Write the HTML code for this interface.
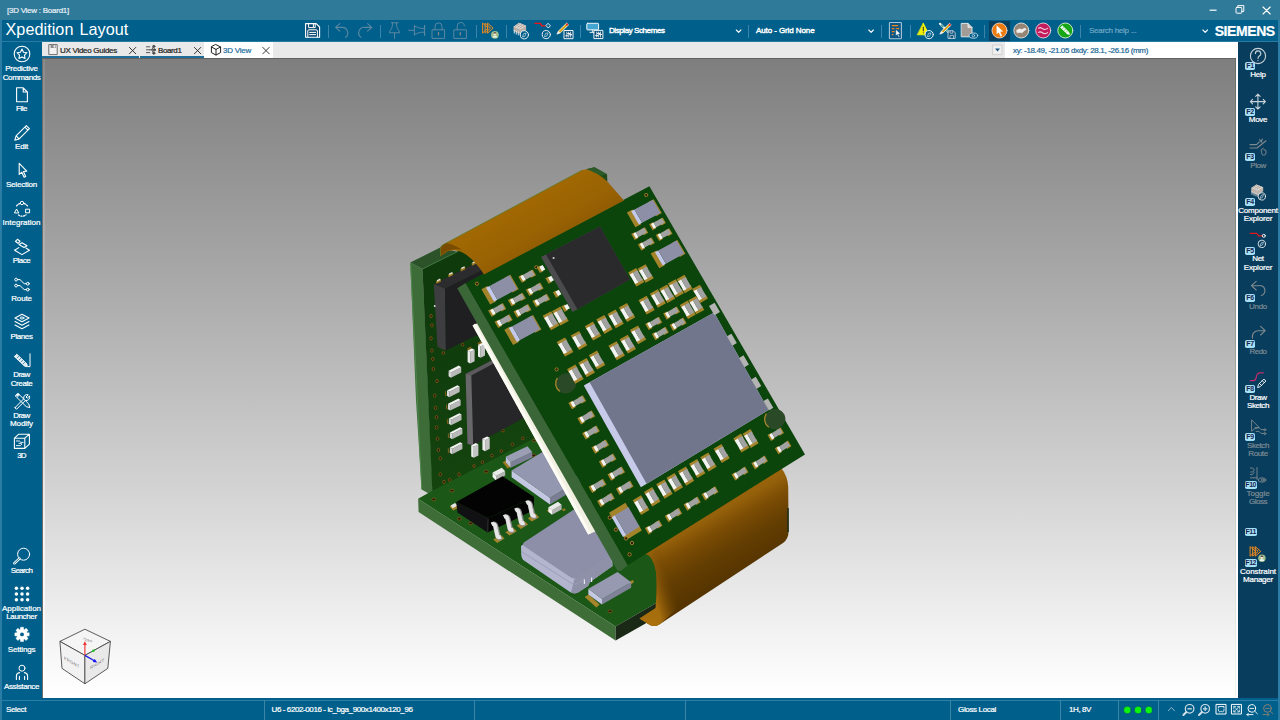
<!DOCTYPE html>
<html lang="en">
<head>
<meta charset="utf-8">
<title>Xpedition Layout - [3D View : Board1]</title>
<style>
*{box-sizing:border-box;margin:0;padding:0}
html,body{width:1280px;height:720px;overflow:hidden;background:#005f8b;font-family:"Liberation Sans",sans-serif;color:#fff}
.abs{position:absolute}
span.abs{-webkit-text-stroke:0.22px currentColor}
#app{position:relative;width:1280px;height:720px;overflow:hidden;background:#005f8b}
#titlebar{position:absolute;left:0;top:0;width:1280px;height:20px;background:#2f7999}
#titlebar .t{position:absolute;left:7px;top:5px;font-size:8px;line-height:10px;color:#e8f1f6;letter-spacing:0.1px}
#toolbar{position:absolute;left:0;top:20px;width:1280px;height:22px;background:#005f8b}
#appname{position:absolute;left:5px;top:19px;font-size:17.5px;line-height:22px;color:#fff;letter-spacing:0.35px;word-spacing:1px}
#tabbar{position:absolute;left:42px;top:42px;width:1196px;height:16px;background:#e9e9e9}
#left{position:absolute;left:0;top:42px;width:42px;height:656px;background:#005f8b}
#right{position:absolute;left:1238px;top:42px;width:40px;height:656px;background:#093d5d}
#status{position:absolute;left:0;top:698px;width:1280px;height:22px;background:#005f8b}
#view{position:absolute;left:42px;top:58px;width:1194px;height:640px;background:linear-gradient(#7e7e7e 0%,#a8a8a8 34%,#d0d0d0 65%,#fcfcfc 97%,#fff 100%)}
.lb{position:absolute;left:0;width:42px;text-align:center;font-size:7.6px;line-height:9px;color:#fff;white-space:nowrap}
.rb{position:absolute;left:-4px;width:51px;text-align:center;font-size:7.6px;line-height:9px;color:#fff;white-space:nowrap}
.rb.dim{color:#5d7f96}
.fk{position:absolute;border-radius:1.8px;background:#a4e0f6;color:#1a2450;font-size:7px;font-weight:bold;text-align:center;letter-spacing:-0.4px;overflow:hidden}
.sep{position:absolute;top:25px;width:1px;height:13px;background:#3c84a8}
.tt{position:absolute;font-size:7.6px;line-height:10px;color:#fff;white-space:nowrap}
.st{position:absolute;top:5px;font-size:7.6px;line-height:10px;color:#fff;white-space:nowrap}
.ssep{position:absolute;width:1px;height:20px;background:#3c84a8}
svg{position:absolute;overflow:visible}
</style>
</head>
<body>
<div id="app">
<div id="view"></div>
<div class="abs" style="left:42px;top:58px;width:1194px;height:1px;background:#616161"></div>
<div class="abs" style="left:42px;top:58px;width:1px;height:640px;background:#6e6e6e"></div><div class="abs" style="left:43px;top:59px;width:1.5px;height:639px;background:linear-gradient(#8a8a8a,#bdbdbd 40%,#f4f4f4 75%,#fff)"></div>
<div class="abs" style="left:1235px;top:58px;width:1px;height:640px;background:linear-gradient(#6a6a6a,#9c9c9c 45%,#dcdcdc 80%,#f6f6f6)"></div>
<div class="abs" style="left:1236px;top:58px;width:2px;height:640px;background:#fff"></div>
<div id="titlebar"></div><div id="toolbar"></div>
<div class="abs" style="left:0;top:41px;width:1280px;height:1px;background:#2a7aa2"></div>
<div id="left"></div><div id="right"></div>
<div id="tabbar"></div>
<div id="status"></div><div class="abs" style="left:0;top:700px;width:1280px;height:1px;background:#2d7ea6"></div>
<div class="abs" style="left:0;top:20px;width:1.5px;height:700px;background:#2b7da5"></div><div class="abs" style="left:1278px;top:20px;width:2px;height:700px;background:#2b7da5"></div>
<span class="abs" style="left:7.00px;top:7px;font-size:8px;line-height:8px;letter-spacing:-0.253px;color:#e4eef4;white-space:nowrap;">[3D View : Board1]</span>
<span class="abs" style="left:5.50px;top:21px;font-size:16.2px;line-height:16px;letter-spacing:0.050px;color:#fff;white-space:nowrap;word-spacing:1.5px;-webkit-text-stroke:0;">Xpedition Layout</span>
<div class="abs" style="left:204px;top:42px;width:69px;height:16px;background:#fff"></div>
<div class="abs" style="left:42px;top:56px;width:162px;height:2px;background:#1e6e98"></div>
<div class="abs" style="left:139px;top:55px;width:1px;height:3px;background:#e9e9e9"></div>
<div class="abs" style="left:1005px;top:42px;width:233px;height:16px;background:#fff"></div>
<div class="abs" style="left:204px;top:57.5px;width:1032px;height:1.5px;background:#616161"></div>
<span class="abs" style="left:60.00px;top:47px;font-size:8px;line-height:8px;letter-spacing:-0.282px;color:#222;white-space:nowrap;">UX Video Guides</span>
<span class="abs" style="left:158.00px;top:47px;font-size:8px;line-height:8px;letter-spacing:-0.383px;color:#222;white-space:nowrap;">Board1</span>
<span class="abs" style="left:223.00px;top:47px;font-size:8px;line-height:8px;letter-spacing:-0.235px;color:#1f6fa0;white-space:nowrap;">3D View</span>
<span class="abs" style="left:1013.00px;top:47px;font-size:8px;line-height:8px;letter-spacing:-0.343px;color:#1f6a97;white-space:nowrap;">xy: -18.49, -21.05 dxdy: 28.1, -26.16 (mm)</span>
<span class="abs" style="left:609.00px;top:27px;font-size:8px;line-height:8px;letter-spacing:-0.420px;color:#fff;white-space:nowrap;-webkit-text-stroke:0.4px #fff;">Display Schemes</span>
<span class="abs" style="left:756.00px;top:27px;font-size:8px;line-height:8px;letter-spacing:-0.095px;color:#fff;white-space:nowrap;-webkit-text-stroke:0.4px #fff;">Auto - Grid None</span>
<span class="abs" style="left:1089.00px;top:27px;font-size:8px;line-height:8px;letter-spacing:-0.272px;color:#6fa6c4;white-space:nowrap;">Search help ...</span>
<span class="abs" style="left:1214.70px;top:24px;font-size:14px;line-height:14px;letter-spacing:-0.416px;color:#fff;white-space:nowrap;font-weight:bold;">SIEMENS</span>
<div class="sep" style="left:327.5px"></div><div class="sep" style="left:379.5px"></div><div class="sep" style="left:476.0px"></div><div class="sep" style="left:506.0px"></div><div class="sep" style="left:580.0px"></div><div class="sep" style="left:748.0px"></div><div class="sep" style="left:880.5px"></div><div class="sep" style="left:910.0px"></div><div class="sep" style="left:983.5px"></div><div class="sep" style="left:1080.0px"></div>
<div class="abs" style="left:989.3px;top:21px;width:20.5px;height:19.5px;background:#0a3f60"></div>
<span class="abs" style="left:5.25px;top:65px;font-size:8px;line-height:8px;letter-spacing:-0.263px;color:#fff;white-space:nowrap;">Predictive</span>
<span class="abs" style="left:2.75px;top:74px;font-size:8px;line-height:8px;letter-spacing:-0.425px;color:#fff;white-space:nowrap;">Commands</span>
<span class="abs" style="left:16.00px;top:105px;font-size:8px;line-height:8px;letter-spacing:-0.473px;color:#fff;white-space:nowrap;">File</span>
<span class="abs" style="left:15.00px;top:143px;font-size:8px;line-height:8px;letter-spacing:-0.196px;color:#fff;white-space:nowrap;">Edit</span>
<span class="abs" style="left:6.00px;top:181px;font-size:8px;line-height:8px;letter-spacing:-0.212px;color:#fff;white-space:nowrap;">Selection</span>
<span class="abs" style="left:2.50px;top:219px;font-size:8px;line-height:8px;letter-spacing:0.018px;color:#fff;white-space:nowrap;">Integration</span>
<span class="abs" style="left:12.75px;top:257px;font-size:8px;line-height:8px;letter-spacing:-0.502px;color:#fff;white-space:nowrap;">Place</span>
<span class="abs" style="left:11.25px;top:295px;font-size:8px;line-height:8px;letter-spacing:-0.170px;color:#fff;white-space:nowrap;">Route</span>
<span class="abs" style="left:10.50px;top:333px;font-size:8px;line-height:8px;letter-spacing:-0.410px;color:#fff;white-space:nowrap;">Planes</span>
<span class="abs" style="left:13.25px;top:371px;font-size:8px;line-height:8px;letter-spacing:-0.542px;color:#fff;white-space:nowrap;">Draw</span>
<span class="abs" style="left:10.75px;top:380px;font-size:8px;line-height:8px;letter-spacing:-0.419px;color:#fff;white-space:nowrap;">Create</span>
<span class="abs" style="left:13.25px;top:412px;font-size:8px;line-height:8px;letter-spacing:-0.542px;color:#fff;white-space:nowrap;">Draw</span>
<span class="abs" style="left:10.00px;top:420px;font-size:8px;line-height:8px;letter-spacing:-0.094px;color:#fff;white-space:nowrap;">Modify</span>
<span class="abs" style="left:17.25px;top:452px;font-size:8px;line-height:8px;letter-spacing:-0.863px;color:#fff;white-space:nowrap;">3D</span>
<span class="abs" style="left:10.75px;top:567px;font-size:8px;line-height:8px;letter-spacing:-0.641px;color:#fff;white-space:nowrap;">Search</span>
<span class="abs" style="left:2.00px;top:605px;font-size:8px;line-height:8px;letter-spacing:-0.012px;color:#fff;white-space:nowrap;">Application</span>
<span class="abs" style="left:6.25px;top:613px;font-size:8px;line-height:8px;letter-spacing:-0.357px;color:#fff;white-space:nowrap;">Launcher</span>
<span class="abs" style="left:7.75px;top:646px;font-size:8px;line-height:8px;letter-spacing:-0.176px;color:#fff;white-space:nowrap;">Settings</span>
<span class="abs" style="left:4.00px;top:683px;font-size:8px;line-height:8px;letter-spacing:-0.368px;color:#fff;white-space:nowrap;">Assistance</span>
<span class="abs" style="left:1250.25px;top:71px;font-size:8px;line-height:8px;letter-spacing:-0.238px;color:#fff;white-space:nowrap;">Help</span>
<span class="abs" style="left:1248.75px;top:116px;font-size:8px;line-height:8px;letter-spacing:-0.266px;color:#fff;white-space:nowrap;">Move</span>
<span class="abs" style="left:1250.25px;top:162px;font-size:8px;line-height:8px;letter-spacing:-0.460px;color:#7b8a92;white-space:nowrap;">Plow</span>
<span class="abs" style="left:1238.25px;top:207px;font-size:8px;line-height:8px;letter-spacing:-0.207px;color:#fff;white-space:nowrap;">Component</span>
<span class="abs" style="left:1243.75px;top:215px;font-size:8px;line-height:8px;letter-spacing:-0.161px;color:#fff;white-space:nowrap;">Explorer</span>
<span class="abs" style="left:1252.25px;top:255px;font-size:8px;line-height:8px;letter-spacing:-0.316px;color:#fff;white-space:nowrap;">Net</span>
<span class="abs" style="left:1243.75px;top:264px;font-size:8px;line-height:8px;letter-spacing:-0.161px;color:#fff;white-space:nowrap;">Explorer</span>
<span class="abs" style="left:1249.00px;top:303px;font-size:8px;line-height:8px;letter-spacing:-0.281px;color:#7b8a92;white-space:nowrap;">Undo</span>
<span class="abs" style="left:1249.50px;top:348px;font-size:8px;line-height:8px;letter-spacing:-0.531px;color:#7b8a92;white-space:nowrap;">Redo</span>
<span class="abs" style="left:1249.50px;top:394px;font-size:8px;line-height:8px;letter-spacing:-0.417px;color:#fff;white-space:nowrap;">Draw</span>
<span class="abs" style="left:1247.00px;top:402px;font-size:8px;line-height:8px;letter-spacing:-0.410px;color:#fff;white-space:nowrap;">Sketch</span>
<span class="abs" style="left:1247.00px;top:442px;font-size:8px;line-height:8px;letter-spacing:-0.410px;color:#7b8a92;white-space:nowrap;">Sketch</span>
<span class="abs" style="left:1248.25px;top:450px;font-size:8px;line-height:8px;letter-spacing:-0.370px;color:#7b8a92;white-space:nowrap;">Route</span>
<span class="abs" style="left:1246.50px;top:490px;font-size:8px;line-height:8px;letter-spacing:-0.096px;color:#7b8a92;white-space:nowrap;">Toggle</span>
<span class="abs" style="left:1249.00px;top:498px;font-size:8px;line-height:8px;letter-spacing:-0.490px;color:#7b8a92;white-space:nowrap;">Gloss</span>
<span class="abs" style="left:1240.00px;top:568px;font-size:8px;line-height:8px;letter-spacing:-0.046px;color:#fff;white-space:nowrap;">Constraint</span>
<span class="abs" style="left:1243.00px;top:576px;font-size:8px;line-height:8px;letter-spacing:-0.225px;color:#fff;white-space:nowrap;">Manager</span>
<span class="fk" style="left:1245.2px;top:61.6px;width:9.6px;height:8.2px;line-height:8.4px">F1</span><span class="fk" style="left:1245.2px;top:108.2px;width:9.6px;height:8.2px;line-height:8.4px">F2</span><span class="fk" style="left:1245.2px;top:153.2px;width:9.6px;height:8.2px;line-height:8.4px">F3</span><span class="fk" style="left:1245.2px;top:198.2px;width:9.6px;height:8.2px;line-height:8.4px">F4</span><span class="fk" style="left:1245.2px;top:246.6px;width:9.6px;height:8.2px;line-height:8.4px">F5</span><span class="fk" style="left:1245.2px;top:294.2px;width:9.6px;height:8.2px;line-height:8.4px">F6</span><span class="fk" style="left:1245.2px;top:339.9px;width:9.6px;height:8.2px;line-height:8.4px">F7</span><span class="fk" style="left:1245.2px;top:384.9px;width:9.6px;height:8.2px;line-height:8.4px">F8</span><span class="fk" style="left:1245.2px;top:433.2px;width:9.6px;height:8.2px;line-height:8.4px">F9</span><span class="fk" style="left:1244.6px;top:480.6px;width:12.2px;height:8.2px;line-height:8.4px">F10</span><span class="fk" style="left:1244.6px;top:528.2px;width:12.2px;height:8.2px;line-height:8.4px">F11</span><span class="fk" style="left:1244.6px;top:559.2px;width:12.2px;height:8.2px;line-height:8.4px">F12</span>
<span class="abs" style="left:6.00px;top:706px;font-size:8px;line-height:8px;letter-spacing:-0.372px;color:#fff;white-space:nowrap;">Select</span>
<span class="abs" style="left:271.50px;top:706px;font-size:8px;line-height:8px;letter-spacing:-0.399px;color:#fff;white-space:nowrap;">U6 - 6202-0016 - ic_bga_900x1400x120_96</span>
<span class="abs" style="left:958.00px;top:706px;font-size:8px;line-height:8px;letter-spacing:-0.345px;color:#fff;white-space:nowrap;">Gloss Local</span>
<span class="abs" style="left:1069.00px;top:706px;font-size:8px;line-height:8px;letter-spacing:-0.410px;color:#fff;white-space:nowrap;">1H, 8V</span>
<div class="ssep" style="left:264.3px;top:700px"></div><div class="ssep" style="left:474.3px;top:700px"></div><div class="ssep" style="left:685.3px;top:700px"></div><div class="ssep" style="left:950.3px;top:700px"></div><div class="ssep" style="left:1060.3px;top:700px"></div><div class="ssep" style="left:1117.8px;top:700px"></div><div class="ssep" style="left:1157.8px;top:700px"></div>
<svg width="1280" height="720" viewBox="0 0 1280 720" style="left:0;top:0" fill="none" stroke="#fff" stroke-width="1" stroke-linecap="round" stroke-linejoin="round">
<circle cx="22" cy="54" r="7.8" stroke-width="1.1"/><polygon points="22.00,49.10 23.53,52.20 26.95,52.69 24.47,55.10 25.06,58.51 22.00,56.90 18.94,58.51 19.53,55.10 17.05,52.69 20.47,52.20" stroke-width="1.1"/>
<path d="M16.6 87.8h6.6l4.2 4.2v9.8h-10.8z M23.2 87.8v4.2h4.2" stroke-width="1.1"/>
<path d="M14.8 140.2l1.3-4.4 10.2-10.2 3.1 3.1-10.2 10.2z M16.1 135.8l3.1 3.1 M24.8 127.1l3.1 3.1" stroke-width="1.1"/>
<path d="M19.2 163.4v11l2.6-2.2 2.3 5 1.6-0.8-2.3-4.9 3.4-0.4z" stroke-width="1.1"/>
<circle cx="22" cy="203" r="1.7"/><path d="M14.6 212.6l2-3.6 2 3.6z"/><rect x="26" y="209.2" width="3.6" height="3.6"/><path d="M19.6 203.6a7 7 0 0 0-3.4 3 M24.4 203.6a7 7 0 0 1 3.6 3.4 M18.6 215a6 6 0 0 0 7.4-0.2" stroke-dasharray="1.1 1.5" stroke-width="1.3"/>
<path d="M15.4 241.3l2-2 2.6 2-2 2z M19 244.5l3-1.8 5 3-3 1.8z M14.6 250.2l4.2-2.6 M29.4 250.2l-7.4 4.4-7.4-4.4 M29.4 250.2l-3.4-2.2" stroke-width="1.1"/>
<circle cx="16.1" cy="279.6" r="1.4"/><circle cx="16.1" cy="285.6" r="1.4"/><circle cx="27.8" cy="283.7" r="1.4"/><circle cx="27.8" cy="289.6" r="1.4"/><path d="M17.5 279.6h2.5l4.2 4.1h2.2 M17.5 285.6h2.5l4.2 4h2.2"/>
<path d="M22 314.3l7 3.7-7 3.7-7-3.7z M15 321.5l7 3.7 7-3.7 M15 325l7 3.7 7-3.7" stroke-width="1.1"/><ellipse cx="22" cy="318" rx="2" ry="1"/>
<path d="M15 356l1.8-1.8 10 9.6 0.6 3-3-0.8-10-9.4z" fill="#dfeaf0" stroke-width="0.9"/><path d="M30 353.8v12.8h-1.6" stroke-width="1"/><path d="M17 358l2-2 M19 360l2-2 M21 362l2-2 M23 364l2-2" stroke="#005f8b" stroke-width="0.6"/>
<path d="M15.2 407.4l8.6-8.6a3.3 3.3 0 0 1 4.4-4l-2.2 2.2 1.2 1.2 2.2-2.2a3.3 3.3 0 0 1-4 4.4l-8.6 8.6a1.3 1.3 0 0 1-1.6-1.6z" stroke-width="1"/><path d="M16.2 395.2l1.8-1.8 10.8 10.6 1 3.6-3.6-1-10.8-10.6z M17.6 396.8l1.8-1.8" stroke-width="1"/><path d="M15.8 395l1.9-1.9 1.5 1.5-1.9 1.9z" fill="#fff" stroke="none"/>
<path d="M14.4 438.2h10.4v10.2h-10.4z M14.4 438.2l4.4-4h10.6l-4.6 4 M29.4 434.2v10l-4.6 4.2" stroke-width="1.1"/><path d="M16.4 441h3l1.4 1.4h2.4 M16.4 445.6h4l1.2-1.2 M19 443.4h2.4" stroke-width="0.9"/>
<circle cx="23.6" cy="554.2" r="6"/><path d="M19.4 558.6l-5 4.6" stroke-width="2.6"/><path d="M19.4 558.6l-5 4.6" stroke="#005f8b" stroke-width="0.9"/>
<circle cx="16.4" cy="588.3" r="1.75" fill="#fff" stroke="none"/><circle cx="16.4" cy="594.1" r="1.75" fill="#fff" stroke="none"/><circle cx="16.4" cy="599.8" r="1.75" fill="#fff" stroke="none"/><circle cx="22" cy="588.3" r="1.75" fill="#fff" stroke="none"/><circle cx="22" cy="594.1" r="1.75" fill="#fff" stroke="none"/><circle cx="22" cy="599.8" r="1.75" fill="#fff" stroke="none"/><circle cx="27.6" cy="588.3" r="1.75" fill="#fff" stroke="none"/><circle cx="27.6" cy="594.1" r="1.75" fill="#fff" stroke="none"/><circle cx="27.6" cy="599.8" r="1.75" fill="#fff" stroke="none"/>
<polygon points="29.15,632.95 29.15,635.85 27.06,635.97 26.69,636.87 28.08,638.43 26.03,640.48 24.47,639.09 23.57,639.46 23.45,641.55 20.55,641.55 20.43,639.46 19.53,639.09 17.97,640.48 15.92,638.43 17.31,636.87 16.94,635.97 14.85,635.85 14.85,632.95 16.94,632.83 17.31,631.93 15.92,630.37 17.97,628.32 19.53,629.71 20.43,629.34 20.55,627.25 23.45,627.25 23.57,629.34 24.47,629.71 26.03,628.32 28.08,630.37 26.69,631.93 27.06,632.83" fill="#fff" stroke="#fff" stroke-width="0.5"/><circle cx="22" cy="634.4" r="1.9" fill="#005f8b" stroke="none"/>
<circle cx="22" cy="668.2" r="3"/><path d="M16.4 679.4v-3.4a3.6 3.6 0 0 1 3.2-3.4 M27.6 679.4v-3.4a3.6 3.6 0 0 0-3.2-3.4 M19.4 679.4v-3 M24.6 679.4v-3" stroke-width="1.1"/>
<g stroke="#c9d3d9"><circle cx="1258" cy="56" r="7.6" stroke-width="1.1"/><path d="M1255.4 53.6a2.7 2.7 0 1 1 3.9 2.4c-1 0.6-1.3 1.2-1.3 2.4" stroke-width="1.1"/><circle cx="1258" cy="60.6" r="0.6" fill="#c9d3d9" stroke="none"/></g>
<g stroke="#c9d3d9" stroke-width="1.1"><path d="M1250.4 101.6h15 M1257.9 94.2v14.8 M1252.6 99.4l-2.2 2.2 2.2 2.2 M1263.2 99.4l2.2 2.2-2.2 2.2 M1255.7 96.4l2.2-2.2 2.2 2.2 M1255.7 106.8l2.2 2.2 2.2-2.2"/></g>
<g stroke="#7f8a8f" stroke-width="1.1"><path d="M1250 144.6h6.6l2.6-2.6 M1250 148h7l9-7.2 M1259.6 139.6l1.8 2.6 M1262.4 139l-1.2 3"/><path d="M1261.6 149.4l1.6-1 0.8 1.4 2 0.6v2.6a2.2 2.2 0 0 1-4.4 0z" stroke-width="0.9"/></g>
<g stroke="none"><path d="M1251.2 188l5.2-3.6 6.8 2.8v4l-5.4 3.8-6.6-3z" fill="#bdb5ad"/><path d="M1251.2 188l5.2-3.6 6.8 2.8-5.4 3.6z" fill="#ddd6cf"/><path d="M1252 191.6v2.6 M1254 192.6v2.6 M1256 193.4v2.6 M1258 194.4v2" stroke="#e8e8e8" stroke-width="0.9"/><path d="M1253 187.6l4-2.6 M1255 188.4l4-2.6 M1257 189.2l4-2.6" stroke="#8f877f" stroke-width="0.6"/></g>
<circle cx="1261.8" cy="196.4" r="3.7" fill="#0a3f60" stroke="#e6ecef" stroke-width="0.9"/><path d="M1260.2 198l1-2.6 2.4-1-1 2.6z" stroke="#e6ecef" stroke-width="0.6"/>
<path d="M1250.2 233.3h6.4l2 2.6h3.6" stroke="#e8141c" stroke-width="1.2"/><circle cx="1263.8" cy="235.8" r="1.5" stroke="#fff" stroke-width="0.9"/>
<circle cx="1261.8" cy="243.9" r="3.7" fill="#0a3f60" stroke="#e6ecef" stroke-width="0.9"/><path d="M1260.2 245.5l1-2.6 2.4-1-1 2.6z" stroke="#e6ecef" stroke-width="0.6"/>
<path d="M1256.2 281.4l-4.8 4.3 4.8 4.3 M1251.6 285.7h6.6a5 5 0 0 1 3.2 9.8" stroke="#7f8a8f" stroke-width="1.1"/>
<path d="M1260.6 326.4l4.6 4.3-4.6 4.3 M1264.8 330.7h-6.4a6 6 0 0 0-6 7.4" stroke="#7f8a8f" stroke-width="1.1"/>
<path d="M1250.2 380.6h3.2c2.6 0 2.6-2 3-4s0.800-3.800 3.400-3.800h3.600" stroke="#c22b6c" stroke-width="1.2"/><path d="M1257.700 387.200l0.800-2.800 5.400-5.400 2 2-5.400 5.400z M1259.400 383.400l2 2 M1262.200 380.600l2 2" stroke="#fff" stroke-width="0.9"/>
<g stroke="#7f8a8f" stroke-width="0.9"><path d="M1251.600 420.200v11l3-2.400 4.200-1.200z"/><path d="M1255 427.600h4l2 2h3 M1256 431.400h3l2 2h3"/><circle cx="1264.800" cy="429.800" r="1"/><circle cx="1264.800" cy="433.600" r="1"/></g>
<g stroke="#7f8a8f" stroke-width="0.9"><path d="M1250.400 468h2.400l1.600 2-1.600 2h-2 M1250.400 474.600h2l1.600-2 M1250.400 477.800h6.600 M1257 467.400v12"/><ellipse cx="1262" cy="480" rx="3.800" ry="2.200"/><ellipse cx="1262.600" cy="480" rx="1.600" ry="0.900"/></g>
<path d="M1250.40 546.90l5.20 4.50l-5.20 4.50z M1253.00 546.90l5.20 4.50l-5.20 4.50z M1255.60 546.90l5.20 4.50l-5.20 4.50z" stroke="#f08a1d" stroke-width="1.0" stroke-linejoin="miter"/>
<g stroke="none"><circle cx="1261.9" cy="558.3" r="3.7" fill="#9fc08c"/><circle cx="1261.9" cy="557.4" r="1.4" fill="#f4e6d6"/><path d="M1259.7 560.9a2.2 2 0 0 1 4.4 0z" fill="#f2f6f8"/><path d="M1260.4 557.0a1.5 1.5 0 0 1 3 0z" fill="#5a4a3a"/></g>
<path d="M305.6 23.6h10.600l3.400 3.400v10.200h-14z" fill="#0a4a72" stroke="#fff" stroke-width="1.1"/><path d="M308.600 23.800v3.800h6.600v-3.800 M313.400 24.400v2.200 M307.800 37v-6a1.200 1.200 0 0 1 1.200-1.200h7.200a1.200 1.200 0 0 1 1.200 1.200v6 M309.600 32.400h6 M309.600 34.600h6" stroke="#fff" stroke-width="1"/>
<path d="M339.800 23.600l-4.200 3.800 4.200 3.800 M335.800 27.400h6.200a5.600 5.600 0 0 1 3.600 10" stroke="#5c88a2" stroke-width="1.1"/>
<path d="M367.600 23.600l4.200 3.800-4.200 3.800 M371.600 27.400h-6.200a5.600 5.600 0 0 0-4.400 10" stroke="#5c88a2" stroke-width="1.1"/>
<path d="M391.400 22.800h6.600 M392.400 22.800v2.600c0 3-3 5-3 7.400h10.200c0-2.400-3-4.400-3-7.400v-2.600 M394.600 32.800v5.600" stroke="#5c88a2" stroke-width="1"/>
<path d="M408.800 30.300h5.600 M414.400 25.400v9.800 M414.400 26.400c3 0 4 2 7.400 2h2.800v-3 M414.400 34.200c3 0 4-2 7.400-2h2.800v3 M424.600 25.400v9.800" stroke="#5c88a2" stroke-width="1"/>
<rect x="432.400" y="29.800" width="12.200" height="8.600" stroke="#5c88a2" stroke-width="1"/><path d="M435 29.800v-3.200a3.500 3.800 0 0 1 7 0v3.200" stroke="#5c88a2" stroke-width="1"/><path d="M438.500 32.600v2.400" stroke="#8f8a86" stroke-width="1.200"/>
<rect x="454.200" y="29.800" width="12.200" height="8.600" stroke="#5c88a2" stroke-width="1"/><path d="M457.200 29.800v-3.200a3.600 3.800 0 0 1 7.200-0.600" stroke="#5c88a2" stroke-width="1"/><path d="M460.300 32.600v2.400" stroke="#8f8a86" stroke-width="1.200"/>
<path d="M482.90 23.30l5.20 4.80l-5.20 4.80z M485.40 23.30l5.20 4.80l-5.20 4.80z M487.90 23.30l5.20 4.80l-5.20 4.80z" stroke="#f08a1d" stroke-width="1.0" stroke-linejoin="miter"/>
<g stroke="none"><circle cx="494.9" cy="34.8" r="3.9" fill="#9fc08c"/><circle cx="494.9" cy="33.9" r="1.4" fill="#f4e6d6"/><path d="M492.7 37.4a2.2 2 0 0 1 4.4 0z" fill="#f2f6f8"/><path d="M493.4 33.5a1.5 1.5 0 0 1 3 0z" fill="#5a4a3a"/></g>
<g stroke="none" transform="translate(513.5 22.7)"><path d="M0 4l5.600-4 7 3v4.400l-5.600 4-7-3.200z" fill="#b9b0a8"/><path d="M0 4l5.600-4 7 3-5.600 3.800z" fill="#ded7d0"/><path d="M0.800 7.600v2.800 M2.800 8.600v2.800 M4.800 9.400v2.800 M6.800 10.400v2" stroke="#eef0f0" stroke-width="0.900"/><path d="M2 3.600l4.400-2.800 M4.200 4.500l4.400-2.800 M6.400 5.400l4.400-2.800" stroke="#8d857d" stroke-width="0.600"/></g><circle cx="524.4" cy="34.8" r="4.1" fill="#005f8b" stroke="#e9eff2" stroke-width="1"/><path d="M522.6 36.599999999999994l1.100-2.900 2.500-0.700-1.100 2.900z" stroke="#e9eff2" stroke-width="0.600"/>
<path d="M535 23.400h5.400l1.400 2.500h3.400" stroke="#f01418" stroke-width="1.300"/><path d="M548.300 23.600l2.100 2.200-2.100 2.200-2.100-2.200z" stroke="#fff" stroke-width="0.900"/><circle cx="546.3" cy="34.6" r="4.1" fill="#005f8b" stroke="#e9eff2" stroke-width="1"/><path d="M544.5 36.4l1.100-2.900 2.500-0.700-1.100 2.900z" stroke="#e9eff2" stroke-width="0.600"/>
<path d="M557.3 34.0L560.4 32.8L568.5 24.9L566.7 23.1L558.5 31.0z" fill="#d9a514" stroke="#f4f4f0" stroke-width="0.800"/><path d="M557.3 34.0L560.4 32.8L558.5 31.0z" fill="#f6f2ea" stroke="none"/><circle cx="567.0" cy="24.6" r="1.100" fill="#e8262c" stroke="none"/><rect x="564.4" y="30.5" width="8.6" height="8.2" fill="#0a4f7a" stroke="#eef3f6" stroke-width="1"/><path d="M566.8 32.1v4.999999999999999 M568.6999999999999 32.1v4.999999999999999 M570.6 32.1v4.999999999999999" stroke="#eef3f6" stroke-width="0.800"/><path d="M565.8 35.7h2 M567.6999999999999 33.5h2 M569.6 34.6h2" stroke="#eef3f6" stroke-width="1.100"/>
<rect x="586.800" y="23.300" width="11.800" height="6.600" rx="0.800" fill="#43a6d2" stroke="#f2f6f8" stroke-width="1"/><path d="M590 32.400h4.600 M592.400 30v2.400" stroke="#dfe8ee" stroke-width="1"/><rect x="594.3" y="30.4" width="8.6" height="8.2" fill="#0a4f7a" stroke="#eef3f6" stroke-width="1"/><path d="M596.6999999999999 32.0v4.999999999999999 M598.5999999999999 32.0v4.999999999999999 M600.5 32.0v4.999999999999999" stroke="#eef3f6" stroke-width="0.800"/><path d="M595.6999999999999 35.599999999999994h2 M597.5999999999999 33.4h2 M599.5 34.5h2" stroke="#eef3f6" stroke-width="1.100"/>
<path d="M736.3000000000001 30l2.300 2.300 2.300-2.300" stroke="#fff" stroke-width="1.100"/><path d="M868.8000000000001 30l2.300 2.300 2.300-2.300" stroke="#fff" stroke-width="1.100"/><path d="M1202.900 30l2.300 2.300 2.300-2.300" stroke="#fff" stroke-width="1.100"/>
<rect x="889.400" y="22.500" width="12" height="16.300" rx="0.800" fill="#0b5788" stroke="#a9c6d8" stroke-width="1.100"/><path d="M891.800 25.600h6.400 M891.800 28.600h2.600 M896.200 28.600h3 M891.800 31.600h2.800 M891.800 34.600h1.600" stroke="#f08418" stroke-width="1.300" stroke-linecap="butt"/><path d="M895.800 29.400v6.400l1.600-1.300 1.300 2.700 0.900-0.400-1.300-2.700 2-0.200z" fill="#fff" stroke="#0b5788" stroke-width="0.400"/>
<path d="M923.400 23.300l5.600 11.500h-11.400z" fill="#f4f400" stroke="#f4f400" stroke-width="0.800"/><path d="M923.300 26.800v4.400" stroke="#333" stroke-width="1.100" stroke-linecap="butt"/><circle cx="923.300" cy="32.800" r="0.600" fill="#333" stroke="none"/><circle cx="929.2" cy="34.6" r="4.1" fill="#005f8b" stroke="#e9eff2" stroke-width="1"/><path d="M927.4000000000001 36.4l1.100-2.900 2.500-0.700-1.100 2.900z" stroke="#e9eff2" stroke-width="0.600"/>
<path d="M940 23.800l8.600 8.400" stroke="#f2f4f4" stroke-width="2.200"/><path d="M941.400 25.200l1.600 1.600 M946 29.600l1.600 1.600" stroke="#2f9a8a" stroke-width="1.300"/><path d="M940.2 34.0L943.2 32.8L951.2 25.1L949.6 23.3L941.5 31.1z" fill="#d9a514" stroke="#f4f4f0" stroke-width="0.800"/><path d="M940.2 34.0L943.2 32.8L941.5 31.1z" fill="#f6f2ea" stroke="none"/><circle cx="949.8" cy="24.8" r="1.100" fill="#e8262c" stroke="none"/><path d="M948.400 30.800h4.800l2 2v5.600h-6.800z" fill="#0a4f7a" stroke="#c2d2dc" stroke-width="0.900"/><path d="M950 30.800v2.400h2.800v-2.400 M950 38.400v-3h3.600v3" stroke="#c2d2dc" stroke-width="0.800"/>
<path d="M961.600 23.400h6.400l4 4v9.400h-10.400z" fill="#a39c96" stroke="#f0f0ee" stroke-width="0.900"/><path d="M968 23.400v4h4" fill="#d8d4d0" stroke="#f0f0ee" stroke-width="0.800"/><ellipse cx="973.400" cy="35.600" rx="4.300" ry="2.600" fill="#005f8b" stroke="#c9dae6" stroke-width="0.900"/><circle cx="973.400" cy="35.600" r="1.200" stroke="#c9dae6" stroke-width="0.800"/>
<circle cx="999.500" cy="30.500" r="7.500" fill="#ee7a10" stroke="#ecd9c6" stroke-width="0.900"/><path d="M996.600 25.200v9l2.100-1.800 1.900 4 1.500-0.700-1.900-4 2.900-0.300z" fill="#fff" stroke="none"/>
<circle cx="1021.300" cy="30.500" r="7.500" fill="#958574" stroke="#e4e4e4" stroke-width="0.900"/><path d="M1016.400 30.400l3-1.600 2.400 0.800 3.200-1.600 1.200 1.400-2.400 1.600-1.600 1.800-3-0.400-1.600 0.600z" fill="#f2f0ee" stroke="#f2f0ee" stroke-width="0.500"/>
<circle cx="1043.200" cy="30.500" r="7.500" fill="#c41d5e" stroke="#ecd6e0" stroke-width="0.900"/><path d="M1038.600 28.200c2-1.600 3 0 4.600 0.800s2.600 0.800 4.400-0.600 M1038.600 32.400c2-1.600 3 0 4.600 0.800s2.600 0.800 4.400-0.600" stroke="#f3d3df" stroke-width="1.100"/>
<circle cx="1065.300" cy="30.500" r="7.500" fill="#16a616" stroke="#d6ecd6" stroke-width="0.900"/><path d="M1060.800 27.200l1.500-1.500 6.600 6.400 0.800 2.600-2.600-0.800-6.600-6.400z" fill="#f2faf2" stroke="#f2faf2" stroke-width="0.500"/><path d="M1062.400 28.800l1.400-1.400 M1064.200 30.600l1.400-1.400 M1066 32.400l1.400-1.400" stroke="#16a616" stroke-width="0.500"/>
<path d="M1209.600 10.200h7" stroke="#fff" stroke-width="1.200" stroke-linecap="butt"/><rect x="1236" y="7.400" width="5.800" height="5.800" rx="0.800" stroke="#fff" stroke-width="1"/><path d="M1237.800 7.200v-1.600h6v5.800h-1.800" stroke="#fff" stroke-width="1"/><path d="M1263 7l7.200 7 M1270.200 7l-7.200 7" stroke="#fff" stroke-width="1.100"/>
<rect x="49.200" y="44.600" width="8" height="10" fill="#f2f2f2" stroke="#6e6e6e" stroke-width="1"/><rect x="50.600" y="45" width="5.200" height="3" fill="#8c8c8c" stroke="none"/><rect x="53.600" y="45.200" width="1.600" height="2.400" fill="#f2f2f2" stroke="none"/>
<g stroke="#4a4a4a" stroke-width="0.900"><path d="M146.400 46.800h3.400 M146.400 49.800h3.400 M146.400 52.600h3.400 M149.800 49.800h2l1.400-2.800 M151.800 49.800h2 M151.800 49.800l1.400 2.800"/><circle cx="153.800" cy="46.400" r="1.100" fill="#4a4a4a"/><circle cx="154.400" cy="49.800" r="1.100" fill="#4a4a4a"/><circle cx="153.800" cy="53.200" r="1.100" fill="#4a4a4a"/></g>
<path d="M216 44.600l4.600 2.400v5.600l-4.600 2.400-4.600-2.400v-5.600z M211.400 47l4.600 2.400 4.600-2.400 M216 49.400v5.600" stroke="#222" stroke-width="1"/>
<path d="M129.4 47.400l6.400 6.400 M135.79999999999998 47.400l-6.400 6.400" stroke="#222" stroke-width="0.900"/><path d="M194.4 47.400l6.400 6.400 M200.79999999999998 47.400l-6.400 6.400" stroke="#222" stroke-width="0.900"/><path d="M262.8 47.400l6.400 6.400 M269.2 47.400l-6.400 6.400" stroke="#222" stroke-width="0.900"/>
<rect x="993" y="45" width="9" height="9.600" fill="#f0f0f0" stroke="#c8c8c8" stroke-width="0.800"/><path d="M995 48.400h5l-2.500 3.200z" fill="#1e5a84" stroke="none"/>
<path d="M1168.300 710.800l3.100-3.400 3.100 3.400" stroke="#8fb6cc" stroke-width="1"/>
<circle cx="1189.6" cy="708.8000000000001" r="4.300" stroke="#d3e0e8" stroke-width="1.200"/><path d="M1186.4 712.0l-3 3" stroke="#d3e0e8" stroke-width="2"/><path d="M1187.4 708.8000000000001h4.400" stroke="#b4d0de" stroke-width="1.500" stroke-linecap="butt"/><circle cx="1205.1999999999998" cy="708.8000000000001" r="4.300" stroke="#d3e0e8" stroke-width="1.200"/><path d="M1202.0 712.0l-3 3" stroke="#d3e0e8" stroke-width="2"/><path d="M1203.0 708.8000000000001h4.400" stroke="#b4d0de" stroke-width="1.500" stroke-linecap="butt"/><path d="M1205.1999999999998 706.6v4.400" stroke="#b4d0de" stroke-width="1.500" stroke-linecap="butt"/>
<rect x="1216.400" y="704.400" width="9.600" height="9.600" stroke="#fff" stroke-width="1"/><path d="M1218.400 708v-1.400h5.600v1.400 M1218.400 709.600c0 2.600 1.600 2.600 2.800 1.600 1.200 1 2.800 1 2.800-1.600" stroke="#fff" stroke-width="0.900"/>
<rect x="1231.800" y="704.400" width="9.600" height="9.600" stroke="#fff" stroke-width="1"/><path d="M1233.800 708.400v-2h2 M1239.400 708.400v-2h-2 M1233.800 710v2h2 M1239.400 710v2h-2 M1234 706.600l5.200 5.200 M1239.200 706.600l-5.200 5.200" stroke="#fff" stroke-width="0.700"/>
<circle cx="1251.800" cy="708.400" r="3.800" stroke="#fff" stroke-width="1"/><path d="M1254.800 711.200l2.600 2.600 M1250 708.400h3.600 M1247 714.600h6 M1248.400 713.200l-1.400 1.400 1.400 1.400" stroke="#fff" stroke-width="0.900"/>
<g stroke="#8c8272"><circle cx="1267.400" cy="708.400" r="3.800" stroke-width="1"/><path d="M1270.400 711.200l2.600 2.600 M1265.600 708.400h3.600 M1263 714.600h6 M1267.600 713.200l1.400 1.400-1.400 1.400" stroke-width="0.900"/></g>
<circle cx="1127.3" cy="710" r="3.7" fill="#0cf60c" stroke="#00477a" stroke-width="0.6"/><circle cx="1138" cy="710" r="3.7" fill="#0cf60c" stroke="#00477a" stroke-width="0.6"/><circle cx="1148.7" cy="710" r="3.7" fill="#0cf60c" stroke="#00477a" stroke-width="0.6"/></svg>
<svg width="1280" height="720" viewBox="0 0 1280 720" style="left:0;top:0" stroke="none">
<defs><linearGradient id="gFlexTop" gradientUnits="userSpaceOnUse" x1="520" y1="200" x2="556" y2="262"><stop offset="0" stop-color="#a26902"/><stop offset="0.5" stop-color="#996203"/><stop offset="1" stop-color="#875603"/></linearGradient><linearGradient id="gFlexBot" gradientUnits="userSpaceOnUse" x1="700" y1="505" x2="740" y2="575"><stop offset="0" stop-color="#a0690c"/><stop offset="0.2" stop-color="#94600a"/><stop offset="0.38" stop-color="#7c4d04"/><stop offset="0.65" stop-color="#643e02"/><stop offset="1" stop-color="#553400"/></linearGradient><linearGradient id="gBend" gradientUnits="userSpaceOnUse" x1="652" y1="590" x2="672" y2="584"><stop offset="0" stop-color="#a66e0d"/><stop offset="0.35" stop-color="#94600a" stop-opacity="0.7"/><stop offset="1" stop-color="#6d4403" stop-opacity="0"/></linearGradient><linearGradient id="gVert" gradientUnits="userSpaceOnUse" x1="430" y1="300" x2="520" y2="480"><stop offset="0" stop-color="#0f3a0c"/><stop offset="1" stop-color="#15450f"/></linearGradient></defs>
<polygon points="586.0,169.2 594.5,167.2 607.0,174.2 607.4,181.5 600.0,178.0" fill="#1f4a1c" /><polygon points="586.0,169.2 594.5,167.2 607.0,174.2 599.0,176.0" fill="#2c5a28" /><polygon points="410.3,262.5 440.3,247.6 458.0,252.0 422.5,269.0" fill="#2b5228" /><polygon points="410.3,262.5 422.5,269.0 433.0,496.0 421.6,489.6 416.0,400.0" fill="#3d6c39" /><polygon points="422.5,269.0 470.0,245.0 560.0,430.0 542.5,440.6 432.5,496.0" fill="url(#gVert)" /><path d="M422.5 269L458 251.4" stroke="#4a8546" stroke-width="0.8" fill="none"/><path d="M410.6 263L421.8 489.4" stroke="#4f8a4b" stroke-width="0.9" fill="none"/><polygon points="418.1,498.8 432.0,491.0 560.0,425.0 664.0,540.0 664.0,598.6 615.6,626.5" fill="#1b5817" /><polygon points="418.1,498.8 615.6,626.5 615.6,640.6 418.6,512.0" fill="#3e6d38" /><polygon points="615.6,626.5 664.0,598.6 664.0,613.0 615.6,640.6" fill="#1a2916" /><ellipse cx="431" cy="316" rx="1.3" ry="1.7" fill="#2a1a08" stroke="#7a5c18" stroke-width="0.8"/><ellipse cx="431.9" cy="325.3" rx="1.3" ry="1.7" fill="#2a1a08" stroke="#7a5c18" stroke-width="0.8"/><ellipse cx="431" cy="338.4" rx="1.3" ry="1.7" fill="#2a1a08" stroke="#7a5c18" stroke-width="0.8"/><ellipse cx="431.9" cy="350.6" rx="1.3" ry="1.7" fill="#2a1a08" stroke="#7a5c18" stroke-width="0.8"/><ellipse cx="432.8" cy="359" rx="1.3" ry="1.7" fill="#2a1a08" stroke="#7a5c18" stroke-width="0.8"/><ellipse cx="433.4" cy="369" rx="1.3" ry="1.7" fill="#2a1a08" stroke="#7a5c18" stroke-width="0.8"/><ellipse cx="434.7" cy="395.6" rx="1.3" ry="1.7" fill="#2a1a08" stroke="#7a5c18" stroke-width="0.8"/><ellipse cx="435.6" cy="407.8" rx="1.3" ry="1.7" fill="#2a1a08" stroke="#7a5c18" stroke-width="0.8"/><ellipse cx="436.5" cy="417.2" rx="1.3" ry="1.7" fill="#2a1a08" stroke="#7a5c18" stroke-width="0.8"/><ellipse cx="436.6" cy="427.5" rx="1.3" ry="1.7" fill="#2a1a08" stroke="#7a5c18" stroke-width="0.8"/><ellipse cx="437.5" cy="438.8" rx="1.3" ry="1.7" fill="#2a1a08" stroke="#7a5c18" stroke-width="0.8"/><ellipse cx="438.4" cy="450" rx="1.3" ry="1.7" fill="#2a1a08" stroke="#7a5c18" stroke-width="0.8"/><ellipse cx="440.3" cy="458.4" rx="1.3" ry="1.7" fill="#2a1a08" stroke="#7a5c18" stroke-width="0.8"/><ellipse cx="440.3" cy="474.4" rx="1.3" ry="1.7" fill="#2a1a08" stroke="#7a5c18" stroke-width="0.8"/><ellipse cx="444" cy="481.9" rx="1.3" ry="1.7" fill="#2a1a08" stroke="#7a5c18" stroke-width="0.8"/><ellipse cx="449.7" cy="480" rx="1.3" ry="1.7" fill="#2a1a08" stroke="#7a5c18" stroke-width="0.8"/><ellipse cx="459" cy="474.4" rx="1.3" ry="1.7" fill="#2a1a08" stroke="#7a5c18" stroke-width="0.8"/><ellipse cx="437" cy="381" rx="1.3" ry="1.7" fill="#2a1a08" stroke="#7a5c18" stroke-width="0.8"/><ellipse cx="474" cy="466" rx="1.3" ry="1.4" fill="#2a1a08" stroke="#7a5c18" stroke-width="0.8"/><ellipse cx="482.5" cy="462.2" rx="1.3" ry="1.4" fill="#2a1a08" stroke="#7a5c18" stroke-width="0.8"/><ellipse cx="491.9" cy="455.6" rx="1.3" ry="1.4" fill="#2a1a08" stroke="#7a5c18" stroke-width="0.8"/><ellipse cx="501.25" cy="451" rx="1.3" ry="1.4" fill="#2a1a08" stroke="#7a5c18" stroke-width="0.8"/><ellipse cx="512.5" cy="444.4" rx="1.3" ry="1.4" fill="#2a1a08" stroke="#7a5c18" stroke-width="0.8"/><ellipse cx="522.8" cy="438.4" rx="1.3" ry="1.4" fill="#2a1a08" stroke="#7a5c18" stroke-width="0.8"/><ellipse cx="534" cy="440.6" rx="1.3" ry="1.4" fill="#2a1a08" stroke="#7a5c18" stroke-width="0.8"/><ellipse cx="503" cy="430.6" rx="1.3" ry="1.4" fill="#2a1a08" stroke="#7a5c18" stroke-width="0.8"/><ellipse cx="462.5" cy="344.6" rx="1.3" ry="1.4" fill="#2a1a08" stroke="#7a5c18" stroke-width="0.8"/><ellipse cx="443.4" cy="353" rx="1.3" ry="1.4" fill="#2a1a08" stroke="#7a5c18" stroke-width="0.8"/><polygon points="433.8,284.1 445.0,288.8 482.5,270.0 475.0,263.4" fill="#2c2c2e" /><polygon points="433.8,284.1 445.0,288.8 445.9,350.6 437.5,346.9" fill="#3e3e40" /><polygon points="445.0,288.8 482.5,270.0 520.0,330.0 475.0,336.0 445.9,350.6" fill="#1f1f21" /><polygon points="436.0,281.2 440.6,278.8 441.0,281.6 436.4,283.8" fill="#9a7a22" /><polygon points="436.8,280.2 440.0,278.6 440.4,280.0 437.2,281.6" fill="#e2e2dc" /><polygon points="448.2,274.6 452.8,272.2 453.2,275.0 448.6,277.2" fill="#9a7a22" /><polygon points="449.0,273.6 452.2,272.0 452.6,273.4 449.4,275.0" fill="#e2e2dc" /><polygon points="460.4,268.8 465.0,266.4 465.4,269.2 460.8,271.4" fill="#9a7a22" /><polygon points="461.2,267.8 464.4,266.2 464.8,267.6 461.6,269.2" fill="#e2e2dc" /><polygon points="471.6,263.2 476.2,260.8 476.6,263.6 472.0,265.8" fill="#9a7a22" /><polygon points="472.4,262.2 475.6,260.6 476.0,262.0 472.8,263.6" fill="#e2e2dc" /><circle cx="434.7" cy="306" r="0.9" fill="#e8e8e8"/><polygon points="445.8,391.2 446.8,396.2 445.0,395.6 445.0,390.8" fill="#7a5f1a" /><polygon points="447.0,390.4 449.2,391.8 449.2,397.2 447.0,395.8" fill="#d9d9d9" /><polygon points="449.2,391.8 459.6,386.6 459.6,392.0 449.2,397.2" fill="#b9b9b9" /><polygon points="447.0,390.4 457.4,385.2 459.6,386.6 449.2,391.8" fill="#f2f2f2" /><polygon points="446.8,404.6 447.8,409.6 446.0,409.0 446.0,404.2" fill="#7a5f1a" /><polygon points="448.0,403.8 450.2,405.2 450.2,410.6 448.0,409.2" fill="#d9d9d9" /><polygon points="450.2,405.2 460.6,400.0 460.6,405.4 450.2,410.6" fill="#b9b9b9" /><polygon points="448.0,403.8 458.4,398.6 460.6,400.0 450.2,405.2" fill="#f2f2f2" /><polygon points="447.7,419.2 448.7,424.2 446.9,423.6 446.9,418.8" fill="#7a5f1a" /><polygon points="448.9,418.4 451.1,419.8 451.1,425.2 448.9,423.8" fill="#d9d9d9" /><polygon points="451.1,419.8 461.5,414.6 461.5,420.0 451.1,425.2" fill="#b9b9b9" /><polygon points="448.9,418.4 459.3,413.2 461.5,414.6 451.1,419.8" fill="#f2f2f2" /><polygon points="448.6,433.2 449.6,438.2 447.9,437.6 447.9,432.8" fill="#7a5f1a" /><polygon points="449.9,432.4 452.1,433.8 452.1,439.2 449.9,437.8" fill="#d9d9d9" /><polygon points="452.1,433.8 462.4,428.6 462.4,434.0 452.1,439.2" fill="#b9b9b9" /><polygon points="449.9,432.4 460.2,427.2 462.4,428.6 452.1,433.8" fill="#f2f2f2" /><polygon points="448.6,448.2 449.6,453.2 447.9,452.6 447.9,447.8" fill="#7a5f1a" /><polygon points="449.9,447.4 452.1,448.8 452.1,454.2 449.9,452.8" fill="#d9d9d9" /><polygon points="452.1,448.8 462.4,443.6 462.4,449.0 452.1,454.2" fill="#b9b9b9" /><polygon points="449.9,447.4 460.2,442.2 462.4,443.6 452.1,448.8" fill="#f2f2f2" /><polygon points="448.6,370.8 451.0,372.4 451.0,377.8 448.6,376.2" fill="#d9d9d9" /><polygon points="451.0,372.4 461.2,367.2 461.2,372.6 451.0,377.8" fill="#b9b9b9" /><polygon points="448.6,370.8 458.8,365.6 461.2,367.2 451.0,372.4" fill="#f2f2f2" /><polygon points="467.1,348.6 470.9,346.6 471.9,349.2 468.1,351.2" fill="#7a5f1a" /><polygon points="467.6,350.6 470.2,352.0 470.2,363.4 467.6,362.0" fill="#ececec" /><polygon points="470.2,352.0 474.6,349.8 474.6,361.2 470.2,363.4" fill="#c4c4c4" /><polygon points="467.6,350.6 472.0,348.4 474.6,349.8 470.2,352.0" fill="#f4f4f4" /><polygon points="477.4,343.0 481.2,341.0 482.2,343.6 478.4,345.6" fill="#7a5f1a" /><polygon points="478.0,345.0 480.6,346.4 480.6,357.8 478.0,356.4" fill="#ececec" /><polygon points="480.6,346.4 485.0,344.2 485.0,355.6 480.6,357.8" fill="#c4c4c4" /><polygon points="478.0,345.0 482.4,342.8 485.0,344.2 480.6,346.4" fill="#f4f4f4" /><polygon points="465.6,374.0 500.0,356.0 560.0,425.0 523.8,418.0 473.0,445.3 467.5,444.0" fill="#262628" /><polygon points="465.6,374.0 471.2,371.2 473.2,445.3 467.5,444.0" fill="#68686a" /><polygon points="465.6,374.0 500.0,356.0 503.0,358.6 471.2,375.4" fill="#5a5a5c" /><polygon points="471.2,445.4 473.8,446.8 473.8,457.8 471.2,456.4" fill="#ececec" /><polygon points="473.8,446.8 478.4,444.4 478.4,455.4 473.8,457.8" fill="#c4c4c4" /><polygon points="471.2,445.4 475.8,443.0 478.4,444.4 473.8,446.8" fill="#f4f4f4" /><polygon points="482.4,438.8 485.1,440.2 485.1,451.2 482.4,449.8" fill="#ececec" /><polygon points="485.1,440.2 489.7,437.8 489.7,448.8 485.1,451.2" fill="#c4c4c4" /><polygon points="482.4,438.8 487.1,436.4 489.7,437.8 485.1,440.2" fill="#f4f4f4" /><ellipse cx="433.75" cy="499.4" rx="2.0" ry="1.4" fill="#2a1a08" stroke="#7a5c18" stroke-width="0.8"/><ellipse cx="451.9" cy="490.6" rx="2.0" ry="1.4" fill="#2a1a08" stroke="#7a5c18" stroke-width="0.8"/><ellipse cx="459.4" cy="518.75" rx="2.0" ry="1.4" fill="#2a1a08" stroke="#7a5c18" stroke-width="0.8"/><ellipse cx="486.25" cy="471.5" rx="2.0" ry="1.4" fill="#2a1a08" stroke="#7a5c18" stroke-width="0.8"/><ellipse cx="470.6" cy="523.4" rx="2.0" ry="1.4" fill="#2a1a08" stroke="#7a5c18" stroke-width="0.8"/><ellipse cx="610" cy="611.25" rx="2.0" ry="1.4" fill="#2a1a08" stroke="#7a5c18" stroke-width="0.8"/><ellipse cx="533.75" cy="455.4" rx="2.0" ry="1.4" fill="#2a1a08" stroke="#7a5c18" stroke-width="0.8"/><polygon points="502.6,462.2 507.6,459.4 512.6,465.4 507.6,468.4" fill="#9a7a22" /><polygon points="505.9,456.6 510.6,462.2 510.6,467.8 505.9,462.2" fill="#c2c5e0" /><polygon points="510.6,462.2 532.2,451.9 532.2,457.5 510.6,467.8" fill="#7d7f96" /><polygon points="505.9,456.6 527.5,446.3 532.2,451.9 510.6,462.2" fill="#9c9eb6" /><polygon points="492.6,472.6 496.0,476.0 496.0,480.4 492.6,477.0" fill="#f6f6f6" /><polygon points="496.0,476.0 505.2,471.2 505.2,475.6 496.0,480.4" fill="#b5b5b5" /><polygon points="492.6,472.6 501.8,467.8 505.2,471.2 496.0,476.0" fill="#e9e9e9" /><polygon points="517.0,481.0 519.6,479.6 521.2,481.2 518.6,482.6" fill="#9a7a22" /><polygon points="523.4,485.1 526.0,483.7 527.6,485.3 525.0,486.7" fill="#9a7a22" /><polygon points="529.8,489.2 532.4,487.8 534.0,489.4 531.4,490.8" fill="#9a7a22" /><polygon points="536.2,493.3 538.8,491.9 540.4,493.5 537.8,494.9" fill="#9a7a22" /><polygon points="542.6,497.4 545.2,496.0 546.8,497.6 544.2,499.0" fill="#9a7a22" /><polygon points="549.0,501.5 551.6,500.1 553.2,501.7 550.6,503.1" fill="#9a7a22" /><polygon points="555.4,505.6 558.0,504.2 559.6,505.8 557.0,507.2" fill="#9a7a22" /><polygon points="561.8,509.7 564.4,508.3 566.0,509.9 563.4,511.3" fill="#9a7a22" /><polygon points="511.6,470.6 550.0,497.8 550.0,504.4 511.6,477.2" fill="#c4c7e2" /><polygon points="550.0,497.8 580.9,479.1 580.9,485.7 550.0,504.4" fill="#7b7d94" /><polygon points="511.6,470.6 542.5,451.9 580.9,479.1 550.0,497.8" fill="#9497b0" /><polygon points="546.6,510.4 551.0,508.0 553.6,510.6 549.6,513.0" fill="#9a7a22" /><polygon points="548.4,507.2 552.0,510.2 552.0,514.8 548.4,511.8" fill="#f6f6f6" /><polygon points="552.0,510.2 561.6,504.8 561.6,509.4 552.0,514.8" fill="#b5b5b5" /><polygon points="548.4,507.2 558.0,501.8 561.6,504.8 552.0,510.2" fill="#e9e9e9" /><polygon points="449.6,506.4 454.6,503.8 458.6,507.6 453.2,510.4" fill="#a5852b" /><polygon points="450.6,505.4 455.0,503.0 457.6,505.6 452.6,508.2" fill="#e4e4e4" /><polygon points="456.2,501.9 488.1,518.1 487.6,532.6 457.5,512.6" fill="#111113" /><polygon points="488.1,518.1 534.0,497.0 534.0,510.0 487.6,532.6" fill="#040404" /><polygon points="456.2,501.9 502.5,476.2 534.0,497.0 488.1,518.1" fill="#030303" /><path d="M488.1 518.7L487.7 532.2" stroke="#2c2c2e" stroke-width="1.2" fill="none"/><polygon points="493.2,539.6 501.0,535.0 504.6,538.6 497.2,543.0" fill="#a5852b" /><path d="M492.2 524.8c3.2 -1.6 3.6 1.0 4.2 4.4l1.6 7.2c0.6 1.6 1.6 1.6 3.6 0.8" stroke="#8a8a8a" stroke-width="5.4" fill="none" stroke-linecap="butt"/><path d="M491.59999999999997 524.4c3.2 -1.6 3.6 1.0 4.2 4.4l1.600 7.200c0.600 1.600 1.600 1.600 3.600 0.800" stroke="#e6e6e6" stroke-width="3.800" fill="none" stroke-linecap="butt"/><polygon points="505.4,532.2 513.2,527.6 516.8,531.2 509.4,535.6" fill="#a5852b" /><path d="M504.40000000000003 517.4c3.2 -1.6 3.6 1.0 4.2 4.4l1.6 7.2c0.6 1.6 1.6 1.6 3.6 0.8" stroke="#8a8a8a" stroke-width="5.4" fill="none" stroke-linecap="butt"/><path d="M503.8 517.0c3.2 -1.6 3.6 1.0 4.2 4.4l1.600 7.200c0.600 1.600 1.600 1.600 3.600 0.800" stroke="#e6e6e6" stroke-width="3.800" fill="none" stroke-linecap="butt"/><polygon points="516.7,525.6 524.5,521.0 528.1,524.6 520.7,529.0" fill="#a5852b" /><path d="M515.6999999999999 510.8c3.2 -1.6 3.6 1.0 4.2 4.4l1.6 7.2c0.6 1.6 1.6 1.6 3.6 0.8" stroke="#8a8a8a" stroke-width="5.4" fill="none" stroke-linecap="butt"/><path d="M515.1 510.4c3.2 -1.6 3.6 1.0 4.2 4.4l1.600 7.200c0.600 1.600 1.600 1.600 3.600 0.800" stroke="#e6e6e6" stroke-width="3.800" fill="none" stroke-linecap="butt"/><polygon points="527.8,518.2 535.6,513.6 539.2,517.2 531.8,521.6" fill="#a5852b" /><path d="M526.8 503.40000000000003c3.2 -1.6 3.6 1.0 4.2 4.4l1.6 7.2c0.6 1.6 1.6 1.6 3.6 0.8" stroke="#8a8a8a" stroke-width="5.4" fill="none" stroke-linecap="butt"/><path d="M526.2 503.0c3.2 -1.6 3.6 1.0 4.2 4.4l1.600 7.200c0.600 1.600 1.600 1.600 3.600 0.800" stroke="#e6e6e6" stroke-width="3.800" fill="none" stroke-linecap="butt"/><path d="M521 546 L590 499 L612 554 L612.6 566 L590 582 L588 586 L578 592.6 Q574.4 594.4 570 592 L524 560.6 Q521.4 558.6 521.2 554z" fill="#b3b5cf"/><path d="M574.4 579 L610.4 555.4 L612.6 566 L590 582 L588 586 L578 592.6 Q574.4 594.4 571 592.4z" fill="#8f91a9"/><path d="M523.8 542.6 Q522.4 544.6 524.6 546.6 L571 577.4 Q574.4 579.4 577.6 577.6 L609.4 556.6 Q611.4 554.6 609.4 552.4 L590 499z" fill="#8d8fa8"/><path d="M521.6 551.600 L572 583.600 Q574.600 584.800 577.600 583.400 L585 578.600" stroke="#9a9cb5" stroke-width="0.900" fill="none"/><path d="M584.400 579.400v4.600 M591.600 577.400v4.600" stroke="#e6e7f2" stroke-width="1.200" fill="none"/><polygon points="584.7,597.0 588.6,594.4 599.6,604.6 596.4,607.6" fill="#a5852b" /><polygon points="628.0,582.8 632.6,580.0 634.0,582.0 629.6,585.4" fill="#a5852b" /><polygon points="588.4,588.8 602.0,599.0 602.0,604.6 588.4,594.4" fill="#c6c9e4" /><polygon points="602.0,599.0 631.1,582.2 631.1,587.8 602.0,604.6" fill="#80829a" /><polygon points="588.4,588.8 617.5,571.9 631.1,582.2 602.0,599.0" fill="#9799b1" /><path d="M640 553 L776 462 L781.6 468.6 Q787.6 476 788.2 487 L788.6 531 Q788.6 539 783 543 L660 624 Q655 627.6 650 625 L639.5 618.6 L655.6 608 Q657.4 585 656 572 Q654 560 648.4 555z" fill="url(#gFlexBot)"/>
<path d="M648.4 555 L668 543 Q676 560 676 585 L676 610 L660 624 Q655 627.6 650 625 L639.5 618.6 L655.6 608 Q657.4 585 656 572 Q654 560 648.4 555z" fill="url(#gBend)"/>
<path d="M788 508v24" stroke="#20301c" stroke-width="1.6" fill="none"/>
<path d="M639.5 618.6L650 625Q655 627.6 660 624L656.4 619.4z" fill="#a9700c"/>
<polygon points="472.6,325.4 482.0,321.0 604.0,528.0 588.2,534.6" fill="#f1f0e2" /><polygon points="472.6,325.4 475.2,323.4 591.0,533.2 588.2,534.6" fill="#fcfcf4" /><polygon points="465.7,283.1 457.2,288.2 503.3,370.0 537.5,430.0 617.4,570.4 620.6,571.0 627.8,565.3" fill="#3b6738" /><polygon points="465.7,283.1 649.4,186.2 805.0,454.4 627.8,565.3" fill="#0b450b" /><ellipse cx="566" cy="383.4" rx="10.5" ry="10" fill="#2a4a27" transform="rotate(-30 566 383.4)"/><path d="M557.4 377.79999999999995A10.5 10 0 0 0 559.8 391.4" stroke="#a5852b" stroke-width="1.3" fill="none"/><ellipse cx="775" cy="419.2" rx="10.5" ry="10" fill="#2a4a27" transform="rotate(-30 775 419.2)"/><path d="M766.4 413.59999999999997A10.5 10 0 0 0 768.8 427.2" stroke="#a5852b" stroke-width="1.3" fill="none"/><circle cx="476.9" cy="283.7" r="1.6" fill="#2a1c08" stroke="#a5852b" stroke-width="0.9"/><circle cx="646.2" cy="195" r="1.6" fill="#2a1c08" stroke="#a5852b" stroke-width="0.9"/><circle cx="556.6" cy="369.4" r="1.6" fill="#2a1c08" stroke="#a5852b" stroke-width="0.9"/><circle cx="536.3" cy="267.2" r="1.6" fill="#2a1c08" stroke="#a5852b" stroke-width="0.9"/><polygon points="583.8,385.6 714.1,312.5 768.4,410.0 640.9,487.2" fill="#c7cae8" /><polygon points="589.6,382.3 714.1,312.5 768.4,410.0 646.6,483.7" fill="#72768c" /><polygon points="727.0,336.3 731.4,333.7 736.8,343.1 732.4,345.7" fill="#b4b4b4" /><polygon points="739.1,357.9 743.5,355.3 748.9,364.6 744.5,367.2" fill="#b4b4b4" /><polygon points="751.3,379.5 755.8,376.8 761.2,386.1 756.7,388.8" fill="#b4b4b4" /><polygon points="763.5,401.1 767.9,398.4 773.3,407.7 768.9,410.4" fill="#b4b4b4" /><polygon points="709.0,305.9 714.6,302.8 720.0,312.1 714.4,315.2" fill="#b4b4b4" /><polygon points="541.0,257.0 600.0,226.5 630.0,279.5 572.5,312.0" fill="#4b4b4d" /><polygon points="546.0,254.4 600.0,226.5 630.0,279.5 577.4,309.2" fill="#2a2a2c" /><circle cx="553.6" cy="258" r="1.1" fill="#c8c8c8"/><polygon points="536.8,267.4 540.2,265.6 543.4,271.2 540.0,272.9" fill="#a5852b" /><polygon points="539.4,266.8 542.7,265.0 545.3,269.4 541.9,271.2" fill="#f3f3f3" /><polygon points="545.4,278.2 548.8,276.4 552.0,282.0 548.6,283.8" fill="#a5852b" /><polygon points="548.0,277.6 551.3,275.8 553.9,280.2 550.5,282.0" fill="#f3f3f3" /><polygon points="552.9,292.2 556.3,290.4 559.5,296.0 556.1,297.8" fill="#a5852b" /><polygon points="555.5,291.6 558.8,289.8 561.4,294.2 558.0,296.0" fill="#f3f3f3" /><polygon points="561.4,306.4 564.8,304.5 568.0,310.1 564.6,311.9" fill="#a5852b" /><polygon points="564.0,305.7 567.3,303.9 569.9,308.3 566.5,310.1" fill="#f3f3f3" /><polygon points="626.9,212.6 632.6,209.6 641.1,224.2 635.4,227.3" fill="#a3842a" /><polygon points="647.9,202.3 653.7,199.2 661.8,213.1 656.0,216.2" fill="#a3842a" /><polygon points="631.2,211.2 634.4,209.5 642.1,222.8 638.9,224.5" fill="#c4c8ea" /><polygon points="634.4,209.5 652.9,199.7 660.5,212.9 642.1,222.8" fill="#8c8fa6" /><polygon points="650.7,253.6 656.4,250.5 664.9,265.2 659.3,268.3" fill="#a3842a" /><polygon points="671.7,243.1 677.4,239.9 685.5,253.8 679.8,257.0" fill="#a3842a" /><polygon points="655.0,252.2 658.2,250.4 665.9,263.7 662.7,265.4" fill="#c4c8ea" /><polygon points="658.2,250.4 676.6,240.4 684.2,253.6 665.9,263.7" fill="#8c8fa6" /><polygon points="481.4,289.2 487.5,286.0 496.3,301.3 490.2,304.5" fill="#a3842a" /><polygon points="504.1,278.1 510.4,274.8 518.7,289.3 512.4,292.6" fill="#a3842a" /><polygon points="486.0,287.7 489.5,285.9 497.4,299.7 494.0,301.5" fill="#c4c8ea" /><polygon points="489.5,285.9 509.4,275.3 517.3,289.0 497.4,299.7" fill="#8c8fa6" /><polygon points="504.3,329.7 510.3,326.4 519.1,341.7 513.1,345.0" fill="#a3842a" /><polygon points="526.9,318.3 533.1,315.0 541.4,329.4 535.2,332.8" fill="#a3842a" /><polygon points="508.9,328.1 512.3,326.3 520.2,340.1 516.8,342.0" fill="#c4c8ea" /><polygon points="512.3,326.3 532.1,315.5 540.0,329.2 520.2,340.1" fill="#8c8fa6" /><polygon points="649.1,224.3 652.8,222.3 656.3,228.3 652.6,230.3" fill="#a5852b" /><polygon points="658.3,219.9 662.7,217.5 665.9,223.1 661.5,225.5" fill="#a5852b" /><polygon points="651.0,224.0 653.6,222.6 656.3,227.2 653.7,228.7" fill="#f3f3f3" /><polygon points="653.6,222.6 661.9,218.2 664.6,222.8 656.3,227.2" fill="#a2a2a2" /><polygon points="631.2,234.0 635.0,232.0 638.5,238.1 634.7,240.1" fill="#a5852b" /><polygon points="640.5,229.5 644.9,227.2 648.2,232.8 643.8,235.2" fill="#a5852b" /><polygon points="633.2,233.7 635.8,232.3 638.5,237.0 635.9,238.4" fill="#f3f3f3" /><polygon points="635.8,232.3 644.1,227.8 646.8,232.5 638.5,237.0" fill="#a2a2a2" /><polygon points="655.7,235.0 659.4,233.0 662.9,239.0 659.2,241.0" fill="#a5852b" /><polygon points="664.9,230.6 669.2,228.2 672.5,233.8 668.1,236.2" fill="#a5852b" /><polygon points="657.6,234.7 660.3,233.3 662.9,237.9 660.3,239.4" fill="#f3f3f3" /><polygon points="660.3,233.3 668.5,228.8 671.2,233.5 662.9,237.9" fill="#a2a2a2" /><polygon points="637.9,244.4 641.6,242.3 645.1,248.4 641.3,250.4" fill="#a5852b" /><polygon points="647.1,239.8 651.5,237.5 654.8,243.1 650.4,245.5" fill="#a5852b" /><polygon points="639.8,244.0 642.4,242.6 645.1,247.3 642.5,248.7" fill="#f3f3f3" /><polygon points="642.4,242.6 650.7,238.1 653.4,242.8 645.1,247.3" fill="#a2a2a2" /><polygon points="518.3,276.7 522.2,274.5 525.8,280.7 521.9,282.8" fill="#a5852b" /><polygon points="528.1,271.9 532.7,269.4 536.1,275.2 531.4,277.7" fill="#a5852b" /><polygon points="520.3,276.3 523.1,274.8 525.9,279.6 523.1,281.1" fill="#f3f3f3" /><polygon points="523.1,274.8 531.9,270.1 534.7,274.9 525.9,279.6" fill="#a2a2a2" /><polygon points="525.8,289.8 529.7,287.7 533.3,293.9 529.4,296.0" fill="#a5852b" /><polygon points="535.6,285.1 540.2,282.6 543.6,288.4 538.9,290.9" fill="#a5852b" /><polygon points="527.8,289.5 530.6,288.0 533.4,292.8 530.6,294.3" fill="#f3f3f3" /><polygon points="530.6,288.0 539.4,283.2 542.2,288.0 533.4,292.8" fill="#a2a2a2" /><polygon points="532.4,301.1 536.3,299.0 539.9,305.2 536.0,307.3" fill="#a5852b" /><polygon points="542.2,296.3 546.8,293.8 550.2,299.6 545.5,302.1" fill="#a5852b" /><polygon points="534.4,300.7 537.2,299.2 540.0,304.0 537.2,305.5" fill="#f3f3f3" /><polygon points="537.2,299.2 546.0,294.5 548.8,299.3 540.0,304.0" fill="#a2a2a2" /><polygon points="507.9,300.1 511.9,298.0 515.5,304.2 511.5,306.3" fill="#a5852b" /><polygon points="517.8,295.3 522.5,292.8 525.9,298.6 521.1,301.1" fill="#a5852b" /><polygon points="509.9,299.7 512.8,298.2 515.6,303.0 512.7,304.6" fill="#f3f3f3" /><polygon points="512.8,298.2 521.7,293.4 524.4,298.3 515.6,303.0" fill="#a2a2a2" /><polygon points="513.5,311.4 517.5,309.3 521.1,315.5 517.1,317.7" fill="#a5852b" /><polygon points="523.4,306.6 528.1,304.0 531.4,309.9 526.7,312.4" fill="#a5852b" /><polygon points="515.6,311.1 518.4,309.5 521.2,314.4 518.3,315.9" fill="#f3f3f3" /><polygon points="518.4,309.5 527.3,304.7 530.0,309.5 521.2,314.4" fill="#a2a2a2" /><polygon points="488.1,310.5 492.2,308.4 495.7,314.6 491.7,316.8" fill="#a5852b" /><polygon points="498.1,305.7 502.9,303.1 506.2,309.0 501.5,311.5" fill="#a5852b" /><polygon points="490.2,310.2 493.1,308.6 495.8,313.5 493.0,315.0" fill="#f3f3f3" /><polygon points="493.1,308.6 502.0,303.8 504.8,308.6 495.8,313.5" fill="#a2a2a2" /><polygon points="494.6,321.7 498.7,319.6 502.3,325.8 498.2,328.0" fill="#a5852b" /><polygon points="504.6,316.9 509.3,314.3 512.7,320.1 508.0,322.7" fill="#a5852b" /><polygon points="496.7,321.4 499.6,319.8 502.3,324.7 499.5,326.2" fill="#f3f3f3" /><polygon points="499.6,319.8 508.5,315.0 511.3,319.8 502.3,324.7" fill="#a2a2a2" /><polygon points="663.2,313.6 666.9,311.5 670.4,317.6 666.7,319.7" fill="#a5852b" /><polygon points="672.4,308.9 676.8,306.4 680.1,312.1 675.7,314.6" fill="#a5852b" /><polygon points="665.1,313.2 667.7,311.7 670.4,316.4 667.8,317.9" fill="#f3f3f3" /><polygon points="667.7,311.7 676.0,307.1 678.7,311.8 670.4,316.4" fill="#a2a2a2" /><polygon points="645.2,323.9 648.9,321.8 652.5,327.9 648.7,330.0" fill="#a5852b" /><polygon points="654.5,319.2 658.9,316.7 662.2,322.4 657.8,324.9" fill="#a5852b" /><polygon points="647.1,323.6 649.8,322.0 652.5,326.8 649.8,328.3" fill="#f3f3f3" /><polygon points="649.8,322.0 658.1,317.3 660.9,322.0 652.5,326.8" fill="#a2a2a2" /><polygon points="669.7,324.9 673.4,322.8 676.9,328.8 673.2,330.9" fill="#a5852b" /><polygon points="678.9,320.1 683.3,317.6 686.6,323.3 682.2,325.8" fill="#a5852b" /><polygon points="671.6,324.5 674.2,323.0 676.9,327.7 674.3,329.2" fill="#f3f3f3" /><polygon points="674.2,323.0 682.5,318.3 685.2,323.0 676.9,327.7" fill="#a2a2a2" /><polygon points="651.8,334.1 655.5,332.0 659.1,338.1 655.3,340.2" fill="#a5852b" /><polygon points="661.1,329.4 665.5,326.8 668.8,332.5 664.4,335.1" fill="#a5852b" /><polygon points="653.7,333.8 656.4,332.3 659.1,337.0 656.5,338.5" fill="#f3f3f3" /><polygon points="656.4,332.3 664.7,327.5 667.5,332.2 659.1,337.0" fill="#a2a2a2" /><polygon points="577.4,418.2 581.3,416.0 584.9,422.2 581.0,424.5" fill="#a5852b" /><polygon points="587.1,413.1 591.8,410.4 595.2,416.3 590.5,419.0" fill="#a5852b" /><polygon points="579.4,417.8 582.2,416.2 585.0,421.1 582.2,422.7" fill="#f3f3f3" /><polygon points="582.2,416.2 591.0,411.1 593.7,416.0 585.0,421.1" fill="#a2a2a2" /><polygon points="582.1,433.3 586.0,431.0 589.6,437.2 585.7,439.5" fill="#a5852b" /><polygon points="591.8,428.1 596.4,425.4 599.8,431.3 595.2,434.0" fill="#a5852b" /><polygon points="584.1,432.8 586.9,431.2 589.7,436.1 586.9,437.7" fill="#f3f3f3" /><polygon points="586.9,431.2 595.6,426.1 598.4,431.0 589.7,436.1" fill="#a2a2a2" /><polygon points="591.4,447.4 595.4,445.1 599.0,451.4 595.1,453.7" fill="#a5852b" /><polygon points="601.1,442.2 605.8,439.5 609.1,445.3 604.5,448.1" fill="#a5852b" /><polygon points="593.4,447.0 596.2,445.3 599.0,450.2 596.2,451.8" fill="#f3f3f3" /><polygon points="596.2,445.3 604.9,440.2 607.7,445.0 599.0,450.2" fill="#a2a2a2" /><polygon points="598.9,461.4 602.8,459.1 606.4,465.4 602.5,467.7" fill="#a5852b" /><polygon points="608.5,456.2 613.1,453.4 616.5,459.3 611.9,462.1" fill="#a5852b" /><polygon points="600.9,461.0 603.6,459.3 606.4,464.2 603.7,465.9" fill="#f3f3f3" /><polygon points="603.6,459.3 612.3,454.2 615.1,459.0 606.4,464.2" fill="#a2a2a2" /><polygon points="607.5,474.4 611.4,472.1 615.0,478.4 611.1,480.7" fill="#a5852b" /><polygon points="617.1,469.2 621.7,466.4 625.1,472.3 620.5,475.1" fill="#a5852b" /><polygon points="609.5,474.0 612.2,472.3 615.0,477.2 612.3,478.9" fill="#f3f3f3" /><polygon points="612.2,472.3 620.9,467.1 623.7,472.0 615.0,477.2" fill="#a2a2a2" /><polygon points="615.9,488.7 619.8,486.3 623.4,492.6 619.5,495.0" fill="#a5852b" /><polygon points="625.5,483.4 630.1,480.6 633.5,486.5 628.9,489.2" fill="#a5852b" /><polygon points="617.9,488.2 620.6,486.5 623.4,491.4 620.7,493.1" fill="#f3f3f3" /><polygon points="620.6,486.5 629.3,481.3 632.1,486.2 623.4,491.4" fill="#a2a2a2" /><polygon points="588.6,486.8 592.5,484.4 596.1,490.7 592.2,493.1" fill="#a5852b" /><polygon points="598.3,481.4 603.0,478.7 606.4,484.6 601.7,487.4" fill="#a5852b" /><polygon points="590.6,486.3 593.4,484.6 596.2,489.5 593.4,491.2" fill="#f3f3f3" /><polygon points="593.4,484.6 602.2,479.4 605.0,484.3 596.2,489.5" fill="#a2a2a2" /><polygon points="597.1,500.9 601.0,498.5 604.6,504.8 600.7,507.2" fill="#a5852b" /><polygon points="606.8,495.5 611.4,492.7 614.8,498.6 610.2,501.5" fill="#a5852b" /><polygon points="599.1,500.4 601.9,498.8 604.7,503.7 601.9,505.3" fill="#f3f3f3" /><polygon points="601.9,498.8 610.6,493.5 613.4,498.4 604.7,503.7" fill="#a2a2a2" /><polygon points="568.4,402.9 572.3,400.6 575.9,406.9 572.0,409.2" fill="#a5852b" /><polygon points="578.1,397.8 582.8,395.2 586.2,401.0 581.5,403.7" fill="#a5852b" /><polygon points="570.4,402.5 573.2,400.9 576.0,405.7 573.2,407.3" fill="#f3f3f3" /><polygon points="573.2,400.9 582.0,395.9 584.8,400.7 576.0,405.7" fill="#a2a2a2" /><polygon points="767.5,435.1 771.1,432.9 774.6,438.9 771.0,441.1" fill="#a5852b" /><polygon points="776.4,430.1 780.7,427.5 784.0,433.1 779.7,435.8" fill="#a5852b" /><polygon points="769.3,434.7 771.9,433.1 774.6,437.8 772.1,439.4" fill="#f3f3f3" /><polygon points="771.9,433.1 779.9,428.2 782.6,432.8 774.6,437.8" fill="#a2a2a2" /><polygon points="774.9,448.2 778.5,446.0 782.0,452.1 778.4,454.3" fill="#a5852b" /><polygon points="783.8,443.2 788.1,440.6 791.4,446.3 787.1,448.9" fill="#a5852b" /><polygon points="776.7,447.8 779.3,446.2 782.0,450.9 779.5,452.5" fill="#f3f3f3" /><polygon points="779.3,446.2 787.3,441.3 790.0,446.0 782.0,450.9" fill="#a2a2a2" /><polygon points="751.4,463.3 755.0,461.0 758.6,467.1 754.9,469.4" fill="#a5852b" /><polygon points="760.4,458.2 764.7,455.5 768.0,461.2 763.7,463.9" fill="#a5852b" /><polygon points="753.3,462.9 755.9,461.2 758.6,466.0 756.0,467.6" fill="#f3f3f3" /><polygon points="755.9,461.2 764.0,456.2 766.7,460.9 758.6,466.0" fill="#a2a2a2" /><polygon points="731.6,474.4 735.3,472.1 738.8,478.3 735.2,480.5" fill="#a5852b" /><polygon points="740.7,469.3 745.1,466.6 748.4,472.3 744.1,475.0" fill="#a5852b" /><polygon points="733.5,474.0 736.1,472.4 738.9,477.1 736.3,478.7" fill="#f3f3f3" /><polygon points="736.1,472.4 744.3,467.3 747.1,472.0 738.9,477.1" fill="#a2a2a2" /><polygon points="701.5,494.3 705.2,491.9 708.8,498.1 705.1,500.4" fill="#a5852b" /><polygon points="710.8,489.0 715.2,486.3 718.5,492.1 714.1,494.8" fill="#a5852b" /><polygon points="703.4,493.8 706.1,492.2 708.8,497.0 706.2,498.6" fill="#f3f3f3" /><polygon points="706.1,492.2 714.4,487.0 717.2,491.8 708.8,497.0" fill="#a2a2a2" /><polygon points="683.6,504.5 687.4,502.1 691.0,508.4 687.2,510.7" fill="#a5852b" /><polygon points="693.0,499.2 697.4,496.4 700.8,502.2 696.3,505.0" fill="#a5852b" /><polygon points="685.5,504.0 688.2,502.4 691.0,507.2 688.3,508.9" fill="#f3f3f3" /><polygon points="688.2,502.4 696.7,497.2 699.4,502.0 691.0,507.2" fill="#a2a2a2" /><polygon points="664.8,515.9 668.6,513.5 672.2,519.8 668.4,522.2" fill="#a5852b" /><polygon points="674.2,510.6 678.8,507.8 682.1,513.6 677.6,516.4" fill="#a5852b" /><polygon points="666.7,515.5 669.5,513.8 672.2,518.6 669.5,520.3" fill="#f3f3f3" /><polygon points="669.5,513.8 678.0,508.5 680.7,513.3 672.2,518.6" fill="#a2a2a2" /><polygon points="644.9,528.1 648.8,525.8 652.4,532.0 648.6,534.4" fill="#a5852b" /><polygon points="654.5,522.7 659.1,519.9 662.5,525.8 657.9,528.6" fill="#a5852b" /><polygon points="646.9,527.7 649.7,526.0 652.5,530.9 649.7,532.6" fill="#f3f3f3" /><polygon points="649.7,526.0 658.3,520.7 661.1,525.5 652.5,530.9" fill="#a2a2a2" /><polygon points="628.2,272.4 636.2,268.0 638.5,272.0 630.5,276.4" fill="#a5852b" /><polygon points="634.0,282.4 642.0,278.0 644.4,282.1 636.4,286.6" fill="#a5852b" /><polygon points="629.6,274.5 632.9,272.8 638.4,282.3 635.2,284.1" fill="#f3f3f3" /><polygon points="632.9,272.8 637.3,270.3 642.8,279.9 638.4,282.3" fill="#a2a2a2" /><polygon points="637.6,268.7 645.6,264.3 647.9,268.2 639.9,272.6" fill="#a5852b" /><polygon points="643.3,278.6 651.3,274.2 653.7,278.3 645.7,282.7" fill="#a5852b" /><polygon points="639.0,270.7 642.2,269.0 647.7,278.5 644.5,280.3" fill="#f3f3f3" /><polygon points="642.2,269.0 646.6,266.5 652.2,276.1 647.7,278.5" fill="#a2a2a2" /><polygon points="542.7,315.8 551.1,311.2 553.4,315.3 545.0,319.9" fill="#a5852b" /><polygon points="548.6,326.0 556.9,321.3 559.4,325.6 551.0,330.2" fill="#a5852b" /><polygon points="544.2,317.9 547.5,316.1 553.2,325.9 549.8,327.7" fill="#f3f3f3" /><polygon points="547.5,316.1 552.2,313.5 557.8,323.3 553.2,325.9" fill="#a2a2a2" /><polygon points="552.0,311.2 560.4,306.6 562.7,310.7 554.4,315.2" fill="#a5852b" /><polygon points="557.9,321.3 566.2,316.8 568.7,321.0 560.3,325.6" fill="#a5852b" /><polygon points="553.5,313.3 556.8,311.5 562.5,321.2 559.1,323.1" fill="#f3f3f3" /><polygon points="556.8,311.5 561.5,308.9 567.1,318.7 562.5,321.2" fill="#a2a2a2" /><polygon points="556.7,342.1 565.1,337.4 567.4,341.5 559.0,346.2" fill="#a5852b" /><polygon points="562.6,352.3 570.9,347.6 573.4,351.9 565.0,356.6" fill="#a5852b" /><polygon points="558.2,344.2 561.5,342.4 567.2,352.2 563.8,354.0" fill="#f3f3f3" /><polygon points="561.5,342.4 566.2,339.8 571.8,349.6 567.2,352.2" fill="#a2a2a2" /><polygon points="570.7,335.5 579.1,330.9 581.4,334.9 573.1,339.6" fill="#a5852b" /><polygon points="576.6,345.7 584.9,341.0 587.3,345.3 579.0,349.9" fill="#a5852b" /><polygon points="572.2,337.6 575.5,335.8 581.2,345.6 577.8,347.4" fill="#f3f3f3" /><polygon points="575.5,335.8 580.1,333.2 585.8,343.0 581.2,345.6" fill="#a2a2a2" /><polygon points="584.8,326.2 593.0,321.6 595.4,325.7 587.1,330.3" fill="#a5852b" /><polygon points="590.6,336.3 598.9,331.7 601.3,336.0 593.1,340.6" fill="#a5852b" /><polygon points="586.2,328.3 589.5,326.5 595.2,336.2 591.9,338.1" fill="#f3f3f3" /><polygon points="589.5,326.5 594.1,323.9 599.7,333.7 595.2,336.2" fill="#a2a2a2" /><polygon points="596.2,319.6 604.4,315.1 606.8,319.1 598.6,323.7" fill="#a5852b" /><polygon points="602.0,329.7 610.2,325.1 612.7,329.3 604.5,333.9" fill="#a5852b" /><polygon points="597.7,321.7 601.0,319.9 606.6,329.6 603.3,331.4" fill="#f3f3f3" /><polygon points="601.0,319.9 605.5,317.4 611.1,327.1 606.6,329.6" fill="#a2a2a2" /><polygon points="607.5,314.0 615.6,309.5 617.9,313.5 609.8,318.0" fill="#a5852b" /><polygon points="613.3,324.0 621.4,319.5 623.8,323.7 615.7,328.2" fill="#a5852b" /><polygon points="608.9,316.1 612.2,314.3 617.8,323.9 614.5,325.8" fill="#f3f3f3" /><polygon points="612.2,314.3 616.7,311.7 622.3,321.4 617.8,323.9" fill="#a2a2a2" /><polygon points="618.9,307.6 627.0,303.1 629.3,307.1 621.2,311.7" fill="#a5852b" /><polygon points="624.7,317.7 632.8,313.1 635.2,317.3 627.1,321.9" fill="#a5852b" /><polygon points="620.3,309.7 623.6,307.9 629.2,317.6 625.9,319.4" fill="#f3f3f3" /><polygon points="623.6,307.9 628.1,305.4 633.7,315.1 629.2,317.6" fill="#a2a2a2" /><polygon points="608.4,345.8 616.6,341.2 618.9,345.3 610.8,349.9" fill="#a5852b" /><polygon points="614.3,356.0 622.4,351.3 624.9,355.5 616.7,360.2" fill="#a5852b" /><polygon points="609.9,347.9 613.2,346.1 618.8,355.8 615.5,357.7" fill="#f3f3f3" /><polygon points="613.2,346.1 617.7,343.5 623.3,353.2 618.8,355.8" fill="#a2a2a2" /><polygon points="619.7,339.3 627.8,334.7 630.1,338.7 622.0,343.3" fill="#a5852b" /><polygon points="625.5,349.3 633.6,344.7 636.0,348.9 627.9,353.5" fill="#a5852b" /><polygon points="621.1,341.3 624.4,339.5 630.0,349.2 626.7,351.1" fill="#f3f3f3" /><polygon points="624.4,339.5 628.9,337.0 634.5,346.6 630.0,349.2" fill="#a2a2a2" /><polygon points="588.8,355.2 597.0,350.6 599.4,354.6 591.1,359.3" fill="#a5852b" /><polygon points="594.6,365.4 602.9,360.7 605.3,364.9 597.1,369.6" fill="#a5852b" /><polygon points="590.2,357.3 593.5,355.5 599.2,365.3 595.9,367.1" fill="#f3f3f3" /><polygon points="593.5,355.5 598.1,352.9 603.8,362.7 599.2,365.3" fill="#a2a2a2" /><polygon points="578.3,362.7 586.6,358.0 589.0,362.1 580.7,366.8" fill="#a5852b" /><polygon points="584.2,372.9 592.5,368.2 595.0,372.5 586.7,377.2" fill="#a5852b" /><polygon points="579.8,364.8 583.1,363.0 588.8,372.8 585.5,374.7" fill="#f3f3f3" /><polygon points="583.1,363.0 587.7,360.4 593.4,370.2 588.8,372.8" fill="#a2a2a2" /><polygon points="567.0,369.2 575.4,364.5 577.7,368.6 569.4,373.3" fill="#a5852b" /><polygon points="572.9,379.4 581.2,374.7 583.7,379.0 575.3,383.7" fill="#a5852b" /><polygon points="568.5,371.3 571.8,369.4 577.5,379.3 574.1,381.2" fill="#f3f3f3" /><polygon points="571.8,369.4 576.5,366.8 582.1,376.7 577.5,379.3" fill="#a2a2a2" /><polygon points="629.9,330.0 638.0,325.4 640.3,329.4 632.2,334.0" fill="#a5852b" /><polygon points="635.7,340.0 643.8,335.4 646.2,339.6 638.1,344.2" fill="#a5852b" /><polygon points="631.3,332.0 634.6,330.2 640.2,339.9 636.9,341.7" fill="#f3f3f3" /><polygon points="634.6,330.2 639.1,327.7 644.6,337.3 640.2,339.9" fill="#a2a2a2" /><polygon points="638.5,300.3 646.6,295.8 648.9,299.8 640.9,304.3" fill="#a5852b" /><polygon points="644.3,310.2 652.3,305.7 654.7,309.9 646.7,314.4" fill="#a5852b" /><polygon points="640.0,302.3 643.2,300.5 648.8,310.2 645.5,311.9" fill="#f3f3f3" /><polygon points="643.2,300.5 647.7,298.1 653.2,307.7 648.8,310.2" fill="#a2a2a2" /><polygon points="649.8,293.7 657.8,289.2 660.1,293.2 652.1,297.6" fill="#a5852b" /><polygon points="655.5,303.6 663.5,299.2 665.9,303.3 657.9,307.8" fill="#a5852b" /><polygon points="651.2,295.7 654.4,294.0 660.0,303.5 656.8,305.3" fill="#f3f3f3" /><polygon points="654.4,294.0 658.8,291.5 664.4,301.1 660.0,303.5" fill="#a2a2a2" /><polygon points="659.2,289.0 667.1,284.6 669.4,288.6 661.5,293.0" fill="#a5852b" /><polygon points="665.0,298.9 672.9,294.5 675.3,298.6 667.4,303.1" fill="#a5852b" /><polygon points="660.6,291.1 663.8,289.3 669.3,298.9 666.2,300.6" fill="#f3f3f3" /><polygon points="663.8,289.3 668.2,286.9 673.7,296.4 669.3,298.9" fill="#a2a2a2" /><polygon points="667.8,283.6 675.7,279.2 678.0,283.1 670.1,287.5" fill="#a5852b" /><polygon points="673.6,293.5 681.5,289.1 683.8,293.2 676.0,297.6" fill="#a5852b" /><polygon points="669.3,285.6 672.4,283.9 677.9,293.4 674.8,295.2" fill="#f3f3f3" /><polygon points="672.4,283.9 676.8,281.4 682.3,291.0 677.9,293.4" fill="#a2a2a2" /><polygon points="676.7,279.2 684.5,274.8 686.8,278.8 679.0,283.1" fill="#a5852b" /><polygon points="682.4,289.1 690.2,284.7 692.6,288.8 684.8,293.2" fill="#a5852b" /><polygon points="678.1,281.2 681.2,279.5 686.7,289.0 683.6,290.8" fill="#f3f3f3" /><polygon points="681.2,279.5 685.6,277.1 691.1,286.5 686.7,289.0" fill="#a2a2a2" /><polygon points="692.1,289.1 699.9,284.7 702.2,288.6 694.4,293.0" fill="#a5852b" /><polygon points="697.8,298.9 705.6,294.5 708.0,298.6 700.2,303.0" fill="#a5852b" /><polygon points="693.5,291.1 696.6,289.4 702.1,298.8 699.0,300.6" fill="#f3f3f3" /><polygon points="696.6,289.4 701.0,286.9 706.5,296.4 702.1,298.8" fill="#a2a2a2" /><polygon points="679.8,305.0 687.7,300.6 690.0,304.5 682.1,309.0" fill="#a5852b" /><polygon points="685.6,314.9 693.4,310.4 695.8,314.6 688.0,319.0" fill="#a5852b" /><polygon points="681.3,307.1 684.4,305.3 690.0,314.8 686.8,316.6" fill="#f3f3f3" /><polygon points="684.4,305.3 688.8,302.8 694.3,312.3 690.0,314.8" fill="#a2a2a2" /><polygon points="688.3,300.3 696.2,295.9 698.4,299.8 690.6,304.3" fill="#a5852b" /><polygon points="694.0,310.2 701.9,305.7 704.3,309.9 696.4,314.3" fill="#a5852b" /><polygon points="689.7,302.4 692.9,300.6 698.4,310.1 695.3,311.9" fill="#f3f3f3" /><polygon points="692.9,300.6 697.2,298.1 702.7,307.6 698.4,310.1" fill="#a2a2a2" /><polygon points="632.7,500.3 641.0,495.3 643.3,499.4 635.1,504.4" fill="#a5852b" /><polygon points="638.6,510.6 646.9,505.6 649.4,509.9 641.1,514.9" fill="#a5852b" /><polygon points="634.2,502.5 637.5,500.4 643.2,510.4 639.9,512.4" fill="#f3f3f3" /><polygon points="637.5,500.4 642.1,497.6 647.8,507.5 643.2,510.4" fill="#a2a2a2" /><polygon points="644.0,491.9 652.2,486.9 654.5,491.0 646.3,496.0" fill="#a5852b" /><polygon points="649.9,502.2 658.1,497.2 660.5,501.5 652.3,506.5" fill="#a5852b" /><polygon points="645.4,494.1 648.7,492.0 654.4,501.9 651.1,503.9" fill="#f3f3f3" /><polygon points="648.7,492.0 653.3,489.3 659.0,499.1 654.4,501.9" fill="#a2a2a2" /><polygon points="656.2,484.3 664.4,479.4 666.7,483.4 658.6,488.4" fill="#a5852b" /><polygon points="662.1,494.6 670.2,489.6 672.7,493.8 664.6,498.8" fill="#a5852b" /><polygon points="657.7,486.5 660.9,484.5 666.6,494.3 663.3,496.3" fill="#f3f3f3" /><polygon points="660.9,484.5 665.5,481.7 671.1,491.5 666.6,494.3" fill="#a2a2a2" /><polygon points="666.5,477.8 674.6,472.9 677.0,477.0 668.9,481.9" fill="#a5852b" /><polygon points="672.4,488.0 680.5,483.1 683.0,487.3 674.9,492.3" fill="#a5852b" /><polygon points="668.0,480.0 671.2,478.0 676.9,487.8 673.7,489.8" fill="#f3f3f3" /><polygon points="671.2,478.0 675.7,475.2 681.4,485.0 676.9,487.8" fill="#a2a2a2" /><polygon points="677.9,471.3 685.9,466.4 688.3,470.5 680.2,475.4" fill="#a5852b" /><polygon points="683.7,481.5 691.8,476.6 694.2,480.8 686.2,485.8" fill="#a5852b" /><polygon points="679.3,473.5 682.5,471.5 688.2,481.3 685.0,483.3" fill="#f3f3f3" /><polygon points="682.5,471.5 687.0,468.8 692.7,478.5 688.2,481.3" fill="#a2a2a2" /><polygon points="689.1,463.8 697.1,458.9 699.4,462.9 691.4,467.8" fill="#a5852b" /><polygon points="694.9,473.9 703.0,469.0 705.4,473.2 697.4,478.1" fill="#a5852b" /><polygon points="690.6,465.9 693.8,463.9 699.4,473.7 696.2,475.6" fill="#f3f3f3" /><polygon points="693.8,463.9 698.2,461.2 703.8,470.9 699.4,473.7" fill="#a2a2a2" /><polygon points="700.3,457.3 708.3,452.4 710.6,456.4 702.7,461.3" fill="#a5852b" /><polygon points="706.2,467.4 714.1,462.5 716.6,466.7 708.6,471.6" fill="#a5852b" /><polygon points="701.8,459.4 705.0,457.4 710.6,467.1 707.4,469.1" fill="#f3f3f3" /><polygon points="705.0,457.4 709.4,454.7 715.0,464.4 710.6,467.1" fill="#a2a2a2" /><polygon points="713.6,448.8 721.5,444.0 723.8,448.0 715.9,452.8" fill="#a5852b" /><polygon points="719.4,458.8 727.3,454.0 729.7,458.2 721.8,463.0" fill="#a5852b" /><polygon points="715.0,450.9 718.2,448.9 723.8,458.6 720.6,460.6" fill="#f3f3f3" /><polygon points="718.2,448.9 722.6,446.3 728.2,455.9 723.8,458.6" fill="#a2a2a2" /><polygon points="733.3,438.4 741.1,433.6 743.4,437.6 735.6,442.4" fill="#a5852b" /><polygon points="739.1,448.4 746.9,443.6 749.3,447.8 741.5,452.6" fill="#a5852b" /><polygon points="734.7,440.5 737.9,438.6 743.4,448.2 740.3,450.1" fill="#f3f3f3" /><polygon points="737.9,438.6 742.2,435.9 747.8,445.5 743.4,448.2" fill="#a2a2a2" /><polygon points="742.7,433.8 750.4,429.0 752.8,433.0 745.0,437.8" fill="#a5852b" /><polygon points="748.4,443.8 756.2,439.0 758.6,443.2 750.9,448.0" fill="#a5852b" /><polygon points="744.1,435.9 747.2,434.0 752.8,443.6 749.7,445.5" fill="#f3f3f3" /><polygon points="747.2,434.0 751.5,431.3 757.1,440.9 752.8,443.6" fill="#a2a2a2" /><polygon points="609.1,512.8 625.4,502.8 629.1,509.2 612.8,519.2" fill="#a3842a" /><polygon points="622.8,534.9 638.7,525.1 641.8,530.4 625.9,540.2" fill="#a3842a" /><polygon points="611.7,517.3 615.0,515.3 626.3,534.9 623.0,536.9" fill="#c4c8ea" /><polygon points="615.0,515.3 628.4,507.1 639.6,526.6 626.3,534.9" fill="#8c8fa6" /><circle cx="609.8" cy="517.6" r="1.7" fill="#2a1c08" stroke="#a5852b" stroke-width="0.9"/><circle cx="616" cy="529.6" r="1.7" fill="#2a1c08" stroke="#a5852b" stroke-width="0.9"/><circle cx="626" cy="538.4" r="1.7" fill="#2a1c08" stroke="#a5852b" stroke-width="0.9"/><circle cx="629.6" cy="554.4" r="1.7" fill="#2a1c08" stroke="#a5852b" stroke-width="0.9"/><circle cx="632" cy="543" r="1.7" fill="#2a1c08" stroke="#a5852b" stroke-width="0.9"/>
<path d="M440.3 249.5 Q440 246 444 244.2 L581.9 170.3 Q586 168.6 590 170.4 Q604 176 613 188 L624 200.6 L484 274.4 Q476 262 466 254.5 Q461 250.6 456 250.4 Q448 250 444.5 253.5 L440.6 256z" fill="url(#gFlexTop)"/>
<path d="M440.6 256L440.3 249.5Q440 246 444 244.2L446.5 243Q452 243.6 461.9 249.6Q452 248.4 446 251.6z" fill="#7a4c02"/>
<path d="M440.6 256.2L440.3 249.5Q440 246 444 244.2L581.9 170.3" stroke="#5f7a2a" stroke-width="0.8" fill="none"/>
</svg>
<svg width="1280" height="720" viewBox="0 0 1280 720" style="left:0;top:0" font-family="Liberation Sans, sans-serif">
<polygon points="84.9,629.2 110.4,641.4 84.9,655.4 59.9,641.4" fill="#f5f5f5" stroke="#4a4a4a" stroke-width="0.9" stroke-linejoin="round"/><polygon points="59.9,641.4 84.9,655.4 84.9,683.75 62,668.4" fill="#f2f2f2" stroke="#4a4a4a" stroke-width="0.9" stroke-linejoin="round"/><polygon points="84.9,655.4 110.4,641.4 107.8,668.4 84.9,683.75" fill="#e9e9e9" stroke="#4a4a4a" stroke-width="0.9" stroke-linejoin="round"/><text transform="matrix(0.86 0.5 0.08 1 64.2 659.4)" font-size="4.6" fill="#666" letter-spacing="0.45">FRONT</text><text transform="matrix(0.86 -0.5 -0.08 1 90 669.6)" font-size="4.6" fill="#666" letter-spacing="0.5">RIGHT</text><text transform="matrix(0.86 0.36 -0.7 0.5 81.6 639)" font-size="4.8" fill="#777" letter-spacing="0.3">TOP</text><path d="M84.9 655.4V644" stroke="#f04848" stroke-width="1.3"/><path d="M84.9 641.2l-1.9 3.8h3.8z" fill="#f03030"/><path d="M84.9 655.4l9.4 5.4" stroke="#1818f0" stroke-width="1.3"/><path d="M97.2 662.4l-4.4-0.300 1.900-3.200z" fill="#1010f0"/><path d="M91.600 651.800l2.400-1.300" stroke="#10c010" stroke-width="1.200"/><path d="M95.600 649.600l-3.200 0.200 1.500 2.300z" fill="#10c010"/></svg>
</div>
</body>
</html>
